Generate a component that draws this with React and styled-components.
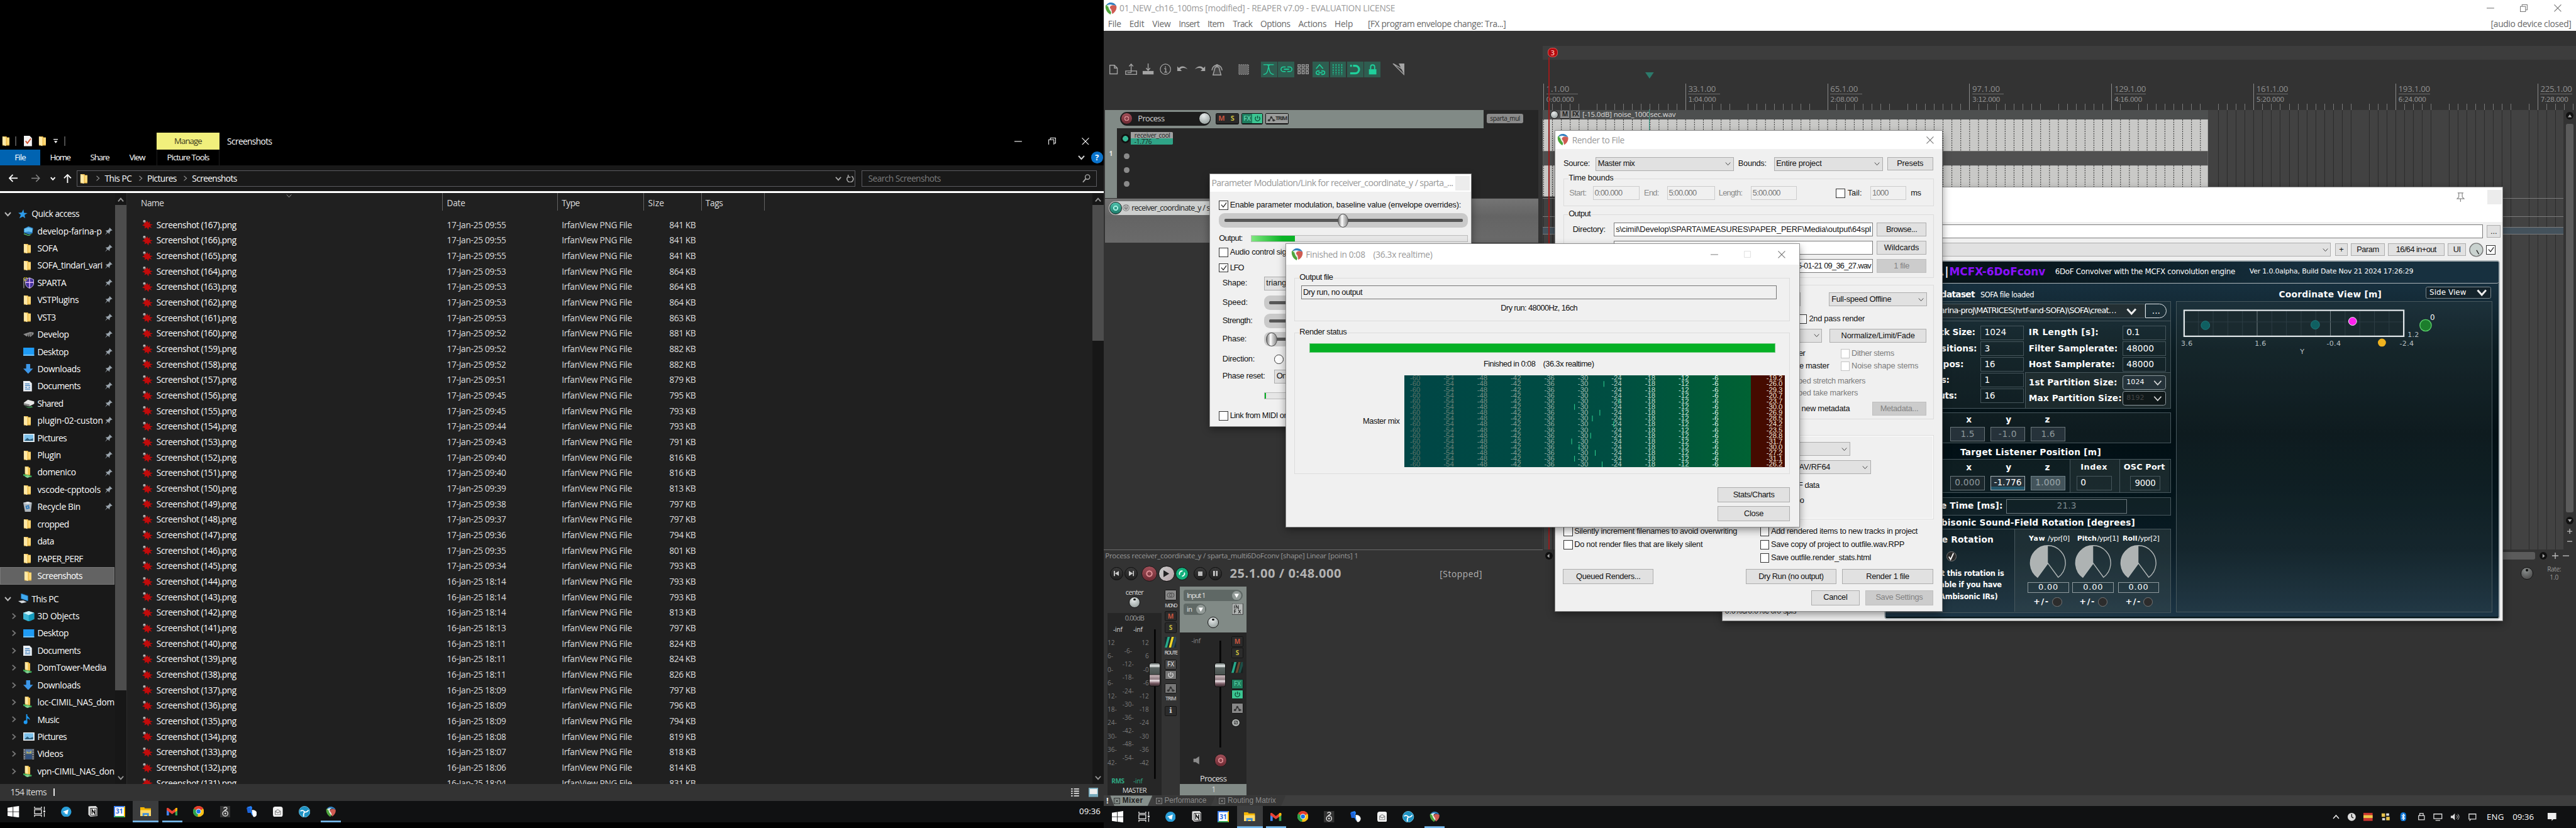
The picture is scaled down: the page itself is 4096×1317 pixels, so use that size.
import React, { useLayoutEffect, useRef } from "react";
import styled, { createGlobalStyle, css } from "styled-components";

const DESK_W = 4480;
const SEGOE = '"Open Sans", "Noto Sans", sans-serif';
const ARIAL = '"Liberation Sans", Arial, sans-serif';
const VERDANA = '"DejaVu Sans", Verdana, sans-serif';

const Global = createGlobalStyle`
  html, body { margin: 0; background: #000; overflow: hidden; }
  *, *::before, *::after { box-sizing: border-box; }
`;

const Desktop = styled.div`
  width: ${DESK_W}px;
  height: 1440px;
  zoom: 0.9142857;
  display: flex;
  position: relative;
  overflow: hidden;
  background: #000;
  font-family: ${SEGOE};
  font-size: 15px;
  line-height: 1;
`;

/* ---------- layout primitives ---------- */

const gaps = (at) => at.slice(1).map((x, i) => `${+(x - at[i]).toFixed(2)}px`).join(" ");

const Line = styled.div`
  display: grid;
  grid-auto-flow: column;
  justify-items: start;
  justify-content: start;
  align-items: ${(p) => p.$align || "center"};
  height: ${(p) => p.$h || 20}px;
  padding-left: ${(p) => p.$at[0] - (p.$o || 0)}px;
  grid-template-columns: ${(p) => gaps(p.$at)} max-content;
  ${(p) => p.$bg && css`background: ${p.$bg};`}
`;

const Stack = styled.div`
  display: grid;
  align-items: start;
  align-content: start;
  grid-template-columns: minmax(0, 1fr);
  padding-top: ${(p) => p.$at[0] - (p.$o || 0)}px;
  grid-template-rows: ${(p) => gaps(p.$at)} max-content;
`;

const TextBox = styled.span`
  display: inline-block;
  white-space: pre;
  width: ${(p) => (p.$w ? `${p.$w}px` : "auto")};
  font-size: ${(p) => p.$s || 15}px;
  font-weight: ${(p) => p.$b || 400};
  color: ${(p) => p.$c || "inherit"};
  ${(p) => p.$f && css`font-family: ${p.$f};`}
  line-height: 1.3;
`;

/* A run of text tracked so that it is exactly `w` wide. */
function T({ w, s, b, c, f, children }) {
  return (
    <TextBox $w={w} $s={s} $b={b} $c={c} $f={f}>
      <span data-fit={w || undefined}>{children}</span>
    </TextBox>
  );
}

function useTracking(ref) {
  useLayoutEffect(() => {
    const root = ref.current;
    const scale = root.getBoundingClientRect().width / DESK_W;
    const runs = [...root.querySelectorAll("[data-fit]")];
    runs.forEach((el) => { el.style.letterSpacing = "0px"; });
    const widths = runs.map((el) => el.getBoundingClientRect().width / scale);
    runs.forEach((el, i) => {
      const n = el.textContent.length;
      if (n) el.style.letterSpacing = `${(Number(el.dataset.fit) - widths[i]) / n}px`;
    });
  }, [ref]);
}

const Svg = ({ w = 16, h = w, vb, children, ...rest }) => (
  <svg width={w} height={h} viewBox={vb || `0 0 ${w} ${h}`} style={{ display: "block" }} fill="none" {...rest}>
    {children}
  </svg>
);

/* ---------- icons ---------- */

const Folder = () => (
  <Svg w={14} h={18}>
    <path d="M1 1h7l1 2h4v14H1z" fill="#f0c04f" />
    <path d="M1 1l6 2v15l-6-3z" fill="#ffe9a6" />
    <path d="M9 3h4v12H9z" fill="#ffd978" />
  </Svg>
);
const NetFolder = () => (
  <Svg w={16} h={20}>
    <path d="M3 0h6l1 2h2v13H3z" fill="#f0c04f" />
    <path d="M3 0l5 2v12l-5-2z" fill="#ffe9a6" />
    <path d="M0 13l15 3-1 3-14-3z" fill="#3fae5a" />
    <path d="M2 17l6-2 4 3-5 2z" fill="#7fd08f" />
  </Svg>
);
const Chev = ({ d = "down", s = 11, c = "#ddd", sw = 2 }) => {
  const path = { down: "M1 3l4.500 5 4.500-5", right: "M3 1l5 4.500-5 4.500", up: "M1 8l4.500-5 4.500 5" }[d];
  return <Svg w={s} vb="0 0 11 11"><path d={path} stroke={c} strokeWidth={sw} /></Svg>;
};
const Pin = () => (
  <Svg w={15}><path d="M9 1l5 5-3 .5-2 3v3l-3-3L1 14l3.500-5L2 6h3l3-2z" fill="#9aa4ad" /></Svg>
);
const Star = () => (
  <Svg w={16}><path d="M9 0l1 6 6 .5-5 3 1 6-4-3-6 3 2.500-6L0 6l6-.5z" fill="#2d9be8" /></Svg>
);
const ComputerIcon = () => (
  <Svg w={19} h={18}><path d="M6 0l12 4v9L6 9z" fill="#3fa9f0" /><path d="M6 0l12 4v9L6 9z" stroke="#1c5f94" /><path d="M1 13l9-1 6 3-9 2z" fill="#d6dbe0" /></Svg>
);
const ServerIcon = () => (
  <Svg w={18} h={17}><path d="M1 4l8-4 8 3-1 9-6 2-9-3z" fill="#2d86c9" /><path d="M2 4l7-2 7 2-1 6-6-1-7 1z" fill="#6cc3f5" /><path d="M1 12l8 3 6-2-5 4-9-3z" fill="#52b46b" /></Svg>
);
const ShieldIcon = () => (
  <Svg w={19} h={20}><path d="M3 3l8-2 7 3v7c0 4-4 7-7 8-4-1-7-4-7-8z" fill="#43309c" stroke="#d9d4f2" /><path d="M11 1v18M4 9h14" stroke="#e7b9ff" strokeWidth="1.500" /><path d="M1 1v18" stroke="#ccc" /><circle cx="4" cy="3" r="3" stroke="#e3d21f" /></Svg>
);
const ComboIcon = () => (
  <Svg w={19} h={10}><path d="M0 5l12-4 6 1v3l-6 5-1-3-2 3-1-3-2 2z" fill="#8a8a8a" /><path d="M8 5v4M11 4v5M14 3v4" stroke="#333" /></Svg>
);
const DesktopIcon = () => (
  <Svg w={19} h={14}><path d="M0 0h19v14H0z" fill="#1e9bf5" /><path d="M0 12h19v2H0z" fill="#7cc8fa" /></Svg>
);
const DownloadIcon = () => (
  <Svg w={17} h={17}><path d="M5 0h7v8h5l-8.500 9L0 8h5z" fill="#3d97e8" /></Svg>
);
const DocIcon = () => (
  <Svg w={15} h={18}><path d="M0 0h11l4 4v14H0z" fill="#e9eef3" /><path d="M3 5h8M3 8h9M3 11h4M3 14h9M9 11h3" stroke="#3a7ab8" strokeWidth="1.400" /></Svg>
);
const DriveIcon = () => (
  <Svg w={20} h={16}><path d="M1 7l7-5 11 3v4l-8 4-10-2z" fill="#e6e6e6" /><path d="M1 8l10 2v4L1 11z" fill="#888" /><path d="M2 13l8 2 4-2 3 2-8 1z" fill="#3fae5a" /></Svg>
);
const PictureIcon = () => (
  <Svg w={19} h={14}><path d="M.5.5h18v13H.5z" fill="#7cc0ea" stroke="#f3f5f7" strokeWidth="2" /><path d="M2 12l5-5 4 3 6-2v4z" fill="#2c5c7a" /></Svg>
);
const BinIcon = () => (
  <Svg w={15} h={18}><path d="M0 2l8-2 7 2-2 16H3z" fill="#aeb6bd" /><path d="M0 2l8 2 7-2-7-2z" fill="#e4e8ec" /><path d="M5 8l4-1 1 4-4 1z" stroke="#2f79b9" strokeWidth="2" /></Svg>
);
const CubeIcon = () => (
  <Svg w={19} h={18}><path d="M9.500 0L19 3v11l-9.500 4L0 14V3z" fill="#3cb5d3" /><path d="M9.500 0L19 3 9.500 7 0 3z" fill="#c9f1f8" /><path d="M9.500 7L19 3v11l-9.500 4z" fill="#149bbd" /></Svg>
);
const MusicIcon = () => (
  <Svg w={14} h={18}><path d="M6 0v13" stroke="#1e9bf5" strokeWidth="2" /><path d="M6 0c0 5 7 5 5 11 0-3-3-4-5-4z" fill="#1e9bf5" /><circle cx="4" cy="14" r="3.300" fill="#1e9bf5" /></Svg>
);
const VideoIcon = () => (
  <Svg w={19} h={19}><path d="M0 0h19v19H0z" fill="#4b5058" /><path d="M4 1h11v8H4z" fill="#5b7ba8" /><path d="M4 10h11v8H4z" fill="#2f4f7d" /><path d="M6 4l4 3 4-4v5H6z" fill="#bdb355" /><path d="M2 1v18M17 1v18" stroke="#a9adb3" strokeWidth="2" strokeDasharray="2 2" /></Svg>
);
const SplatIcon = () => (
  <Svg w={19} h={18}>
    <path d="M5 1l3 4 1-3 2 4 3-3-1 5 6 1-5 2 3 4-5-2-1 5-3-4-4 2 1-4-5-2 4-2-2-4z" fill="#c20b0b" />
    <circle cx="4" cy="3.500" r="2.600" fill="#777" /><circle cx="3.500" cy="2.800" r="1.200" fill="#eee" />
  </Svg>
);
const ReaperIcon = ({ s = 20 }) => (
  <Svg w={s} vb="0 0 20 20">
    <path d="M1 6c2-4 5-6 9-6s8 3 9 6c-4-2-7-3-11-1-3 1-3 4 0 5z" fill="#2f7fbf" />
    <path d="M1 5c2-2 5-1 6 2 1 4 3 6 4 8l-2 5C4 17 0 12 1 5z" fill="#4ea53c" />
    <path d="M8 8c1-3 5-5 11-2 1 6-3 11-7 13 0-5-5-7-4-11z" fill="#cf5b52" />
    <path d="M2 6c4-4 8-3 10-2-4 0-5 3-3 6 2 2 3 5 2 8-2-5-4-5-5-9-1-3-2-4-4-3z" fill="#fff" opacity=".85" />
  </Svg>
);
const WinMin = ({ c }) => <Svg w={13}><path d="M0 6.500h13" stroke={c} strokeWidth="1.200" /></Svg>;
const WinRestore = ({ c }) => <Svg w={13}><path d="M.6 3.500h9v9h-9zM3.500 3V.6h9v9H10" stroke={c} strokeWidth="1.100" /></Svg>;
const WinMax = ({ c }) => <Svg w={12}><path d="M.6.6h10.800v10.800H.6z" stroke={c} /></Svg>;
const WinClose = ({ c }) => <Svg w={13}><path d="M.5.5l12 12M12.500.5l-12 12" stroke={c} strokeWidth="1.200" /></Svg>;

/* ---------- explorer ---------- */

const LeftMonitor = styled.div`
  width: 1920px;
  height: 1440px;
  padding-top: 231px;
  display: flex;
  flex-direction: column;
  color: #fff;
`;
const VBar = styled.i`
  width: 2px;
  height: ${(p) => p.$h || 16}px;
  background: ${(p) => p.$c || "#4c4c4c"};
`;
const ManageTab = styled.div`
  width: 110px;
  height: 29px;
  background: #f1ef7c;
  color: #3b3a1c;
  display: flex;
  align-items: center;
  justify-content: center;
`;
const RibbonTab = styled.div`
  width: ${(p) => p.$w}px;
  height: 28px;
  display: flex;
  align-items: center;
  justify-content: center;
  background: ${(p) => (p.$file ? "#0063b1" : "transparent")};
  border: ${(p) => (p.$line ? "solid #1e1e1e" : "0 none")};
  border-width: 0 1px;
`;
const Help = styled.div`
  width: 20px;
  height: 20px;
  border-radius: 50%;
  background: #0a73cc;
  display: flex;
  align-items: center;
  justify-content: center;
`;
const AddressField = styled.div`
  width: ${(p) => p.$w}px;
  height: 28px;
  border: 1px solid #5b5b60;
  background: #191919;
`;
const WhiteRule = styled.div`
  height: 3px;
  background: #fff;
`;
const ExplorerBody = styled.div`
  height: 1028px;
  display: flex;
`;
const NavPane = styled.div`
  width: 200px;
  padding-top: 21px;
  background: #191919;
  overflow: hidden;
`;
const ScrollCol = styled.div`
  width: 20px;
  display: flex;
  flex-direction: column;
  align-items: center;
  background: #171717;
  padding-top: 6px;
`;
const ScrollThumb = styled.div`
  width: 20px;
  margin-top: 4px;
  height: ${(p) => p.$h}px;
  background: #4d4d4d;
`;
const ScrollEnd = styled.div`
  margin-top: auto;
  padding-bottom: 6px;
`;
const NavRow = styled.div`
  height: 30px;
  width: 199px;
  margin-bottom: ${(p) => p.$mb || 0}px;
  background: ${(p) => (p.$on ? "#636363" : "transparent")};
  border: ${(p) => (p.$on ? "1px solid #777" : "0 none")};
`;
const NavLabel = styled.div`
  width: ${(p) => p.$w}px;
  overflow: hidden;
`;
const FileList = styled.div`
  width: 1680px;
  background: #202020;
  overflow: hidden;
  border-left: 2px solid #2c2c2c;
`;
const ColRule = styled.i`
  width: 1px;
  height: 31px;
  background: #636363;
`;
const HeadCell = styled.div`
  height: 34px;
  display: flex;
  align-items: center;
  color: #dedede;
`;
const SizeCell = styled.div`
  width: 83px;
  text-align: right;
`;
const StatusStrip = styled.div`
  height: 29px;
  background: #333;
  color: #dcdcdc;
`;

const NAV = [
  [ServerIcon, "develop-farina-p", 112, 1], [Folder, "SOFA", 35, 1], [Folder, "SOFA_tindari_vari", 113, 1],
  [ShieldIcon, "SPARTA", 50, 1], [Folder, "VSTPlugins", 72, 1], [Folder, "VST3", 32, 1],
  [ComboIcon, "Develop", 55, 1], [DesktopIcon, "Desktop", 54, 1], [DownloadIcon, "Downloads", 75, 1],
  [DocIcon, "Documents", 75, 1], [DriveIcon, "Shared", 45, 1], [Folder, "plugin-02-custon", 114, 1],
  [PictureIcon, "Pictures", 51, 1], [Folder, "Plugin", 41, 1], [NetFolder, "domenico", 67, 1],
  [Folder, "vscode-cpptools", 110, 1], [BinIcon, "Recycle Bin", 75, 1], [Folder, "cropped", 55],
  [Folder, "data", 29], [Folder, "PAPER_PERF", 79], [Folder, "Screenshots", 78],
];
const PC = [
  [CubeIcon, "3D Objects", 73], [DesktopIcon, "Desktop", 54], [DocIcon, "Documents", 75],
  [NetFolder, "DomTower-Media", 120], [DownloadIcon, "Downloads", 75], [NetFolder, "loc-CIMIL_NAS_dom", 134],
  [MusicIcon, "Music", 38], [PictureIcon, "Pictures", 51], [VideoIcon, "Videos", 45], [NetFolder, "vpn-CIMIL_NAS_don", 134],
];
const FILES = (
  "17 09:55 841,17 09:55 841,17 09:55 841,17 09:53 864,17 09:53 864,17 09:53 864,17 09:53 863,17 09:52 881," +
  "17 09:52 882,17 09:52 882,17 09:51 879,17 09:45 795,17 09:45 793,17 09:44 793,17 09:43 791,17 09:40 816," +
  "17 09:40 816,17 09:39 813,17 09:38 797,17 09:37 797,17 09:36 794,17 09:35 801,17 09:34 793,16 18:14 793," +
  "16 18:14 793,16 18:14 813,16 18:13 797,16 18:11 824,16 18:11 824,16 18:11 826,16 18:09 797,16 18:09 796," +
  "16 18:09 794,16 18:08 819,16 18:07 818,16 18:06 814,16 18:04 831"
).split(",").map((r) => r.split(" "));

function Explorer() {
  return (
    <LeftMonitor>
      <Line $h={29} $align="center" $at={[3, 26, 42, 67, 93, 112, 272, 395, 1764, 1823, 1881]}>
        <Folder /><VBar />
        <Svg w={14} h={18}><path d="M0 0h10l4 4v14H0z" fill="#f4f4f4" /><path d="M3 9l3 4 6-8" stroke="#d2502c" strokeWidth="2" /></Svg>
        <Folder />
        <Svg w={8} h={8}><path d="M0 0h8v1.500H0zM1 3.500h6L4 7.500z" fill="#fff" /></Svg>
        <VBar />
        <ManageTab><T w={48} s={14.5}>Manage</T></ManageTab>
        <T w={78}>Screenshots</T>
        <WinMin c="#fff" /><WinRestore c="#fff" /><WinClose c="#fff" />
      </Line>
      <Line $h={28} $at={[0, 87, 157, 225, 272, 1875, 1898]}>
        <RibbonTab $w={70} $file><T w={19} s={14.5}>File</T></RibbonTab>
        <T w={35} s={14.5}>Home</T><T w={33} s={14.5}>Share</T><T w={27} s={14.5}>View</T>
        <RibbonTab $w={110} $line><T w={73} s={14.5}>Picture Tools</T></RibbonTab>
        <Chev s={12} c="#ccc" /><Help><T s={14} b={700}>?</T></Help>
      </Line>
      <Line $h={45} $bg="#191919" $at={[15, 55, 88, 111, 134, 1499]}>
        <Svg w={16} h={14}><path d="M16 7H1M7 1L1 7l6 6" stroke="#fff" strokeWidth="2" /></Svg>
        <Svg w={15} h={14}><path d="M0 7h14M8 1l6 6-6 6" stroke="#888" strokeWidth="1.600" /></Svg>
        <Chev s={9} c="#fff" sw={2.5} />
        <Svg w={14} h={16}><path d="M7 16V1M1 7l6-6 6 6" stroke="#fff" strokeWidth="2" /></Svg>
        <AddressField $w={1354}>
          <Line $h={26} $o={135} $at={[139, 165, 182, 239, 256, 317, 334, 1452, 1471]}>
            <Folder /><Chev d="right" s={10} c="#999" sw={1.4} /><T w={47}>This PC</T>
            <Chev d="right" s={10} c="#999" sw={1.4} /><T w={51}>Pictures</T>
            <Chev d="right" s={10} c="#999" sw={1.4} /><T w={78}>Screenshots</T>
            <Chev s={11} c="#aaa" />
            <Svg w={14}><path d="M10 2.500A5.500 5.500 0 1 1 4 3M4 0v4h4" stroke="#aaa" strokeWidth="1.700" /></Svg>
          </Line>
        </AddressField>
        <AddressField $w={409}>
          <Line $h={26} $o={1500} $at={[1510, 1882]}>
            <T w={126} c="#7d7d7d">Search Screenshots</T>
            <Svg w={15}><circle cx="9" cy="5" r="4" stroke="#aaa" strokeWidth="1.500" /><path d="M6 8l-5 6" stroke="#aaa" strokeWidth="2" /></Svg>
          </Line>
        </AddressField>
      </Line>
      <WhiteRule />
      <ExplorerBody>
        <NavPane>
          <NavRow><Line $h={30} $at={[8, 32, 55]}><Chev s={12} c="#bbb" /><Star /><T w={83}>Quick access</T></Line></NavRow>
          {NAV.map(([Icon, name, w, pin], i) => (
            <NavRow key={name} $on={i === 20} $mb={i === 20 ? 10 : 0}>
              <Line $h={i === 20 ? 28 : 30} $o={i === 20 ? 1 : 0} $at={[41, 65, 182]}>
                <Icon /><NavLabel $w={pin ? 115 : 134}><T w={w}>{name}</T></NavLabel>{pin ? <Pin /> : null}
              </Line>
            </NavRow>
          ))}
          <NavRow><Line $h={30} $at={[8, 31, 55]}><Chev s={12} c="#bbb" /><ComputerIcon /><T w={47}>This PC</T></Line></NavRow>
          {PC.map(([Icon, name, w]) => (
            <NavRow key={name}>
              <Line $h={30} $at={[19, 41, 65]}>
                <Chev d="right" s={11} c="#777" /><Icon /><NavLabel $w={135}><T w={w}>{name}</T></NavLabel>
              </Line>
            </NavRow>
          ))}
        </NavPane>
        <ScrollCol><Chev d="up" c="#999" /><ScrollThumb $h={844} /><ScrollEnd><Chev c="#999" /></ScrollEnd></ScrollCol>
        <FileList>
          <Line $h={41.5} $o={222} $align="start" $at={[246, 499, 770, 778, 970, 978, 1120, 1128, 1220, 1228, 1330]}>
            <HeadCell><T w={40}>Name</T></HeadCell><Chev s={10} c="#999" sw={1.2} /><ColRule /><HeadCell><T w={32}>Date</T></HeadCell><ColRule />
            <HeadCell><T w={31}>Type</T></HeadCell><ColRule /><HeadCell><T w={28}>Size</T></HeadCell><ColRule />
            <HeadCell><T w={30}>Tags</T></HeadCell><ColRule />
          </Line>
          {FILES.map(([day, time, kb], i) => (
            <Line key={i} $h={27} $o={222} $at={[248, 273, 778, 978, 1128]}>
              <SplatIcon />
              <T w={139}>{`Screenshot (${167 - i}).png`}</T>
              <T w={103} c="#dedede">{`${day}-Jan-25 ${time}`}</T>
              <T w={122} c="#dedede">IrfanView PNG File</T>
              <SizeCell><T w={46} c="#dedede">{`${kb} KB`}</T></SizeCell>
            </Line>
          ))}
        </FileList>
        <ScrollCol><Chev d="up" c="#999" /><ScrollThumb $h={236} /><ScrollEnd><Chev c="#999" /></ScrollEnd></ScrollCol>
      </ExplorerBody>
      <StatusStrip>
        <Line $h={29} $at={[18, 93, 1863, 1893]}>
          <T w={63}>154 items</T><VBar $h={13} $c="#e5e5e5" />
          <Svg w={14} h={16}><path d="M0 2h14M0 6h14M0 10h14M0 14h14" stroke="#ddd" strokeWidth="2" strokeDasharray="3 2 9" /></Svg>
          <Svg w={17} h={16}><path d="M0 0h17v16H0z" fill="#7ab" /><path d="M2 2h13v9H2z" fill="#eee" /></Svg>
        </Line>
      </StatusStrip>
      <Taskbar />
    </LeftMonitor>
  );
}

/* ---------- taskbar ---------- */

const Bar = styled.div`
  height: 38px;
  padding-left: 1px;
  display: flex;
  align-items: center;
  background: #101112;
  color: #fff;
`;
const Task = styled.div`
  width: 45px;
  margin-right: 1px;
  height: 38px;
  display: flex;
  align-items: center;
  justify-content: center;
  background: ${(p) => (p.$on ? "#3b3c3d" : "transparent")};
  box-shadow: inset 0 ${(p) => (p.$on ? -3 : 0)}px #76b9ed;
`;
const Underlined = styled.div`
  width: 35px;
  height: 38px;
  display: flex;
  align-items: center;
  justify-content: center;
  box-shadow: inset 0 -3px #76b9ed;
`;
const ClockEnd = styled.div`
  margin-left: auto;
  padding-right: 6px;
`;

const WinLogo = () => <Svg w={20}><path d="M0 3l9-1.300v8H0zM10 1.500L20 0v9.700H10zM0 10.500h9v8L0 17.300zM10 10.500h10V20l-10-1.400z" fill="#fff" /></Svg>;
const TaskView = () => <Svg w={20}><path d="M1 1v3h12V1M1 19v-3h12v3M1 6.500h12v7H1z" stroke="#eee" strokeWidth="1.400" /><path d="M18 1v6M18 12v7" stroke="#eee" strokeWidth="1.400" /><path d="M16.500 8h3v3h-3z" fill="#fff" /></Svg>;
const Telegram = () => <Svg w={18}><circle cx="9" cy="9" r="9" fill="#2ba0da" /><path d="M3 9l10-4-2 9-3-2-1 1-.5-3z" fill="#fff" /></Svg>;
const Notion = () => <Svg w={17} h={19}><path d="M1 1l12-1 3 3v14l-12 1-3-3z" fill="#efefef" stroke="#bbb" /><path d="M4 4h11v12H4z" fill="#fff" stroke="#111" /><path d="M7 14V6.500l5 7V6" stroke="#111" strokeWidth="1.800" /></Svg>;
const CalendarBox = styled.div`
  width: 20px;
  height: 20px;
  border: 3px solid #4285f4;
  border-right-color: #fbbc04;
  border-bottom-color: #34a853;
  background: #fff;
  display: flex;
  align-items: center;
  justify-content: center;
`;
const ExplorerIcon = () => <Svg w={19} h={16}><path d="M0 0h7l1 2h11v14H0z" fill="#f4b400" /><path d="M0 5h19v11H0z" fill="#ffd968" /><path d="M4 16v-6h11v6h-3v-3H7v3z" fill="#3f8fdc" /></Svg>;
const Gmail = () => <Svg w={19} h={14}><path d="M0 1v13h4V5z" fill="#4285f4" /><path d="M19 1v13h-4V5z" fill="#34a853" /><path d="M0 1c1-2 3-1 4 0l5.500 4.500L15 1c1-1 3-2 4 0v3l-9.500 7L0 4z" fill="#ea4335" /><path d="M15 1c1-1 3-2 4 0v3l-4 3z" fill="#fbbc04" /></Svg>;
const Chrome = () => <Svg w={19}><circle cx="9.500" cy="9.500" r="9.500" fill="#fbc116" /><path d="M9.500 9.500L1.300 4.700A9.500 9.500 0 0 1 17.700 4.700z" fill="#e33b2e" /><path d="M9.500 9.500L1.300 4.700a9.500 9.500 0 0 0 6.500 14.200z" fill="#2ba24c" /><circle cx="9.500" cy="9.500" r="4.600" fill="#fff" /><circle cx="9.500" cy="9.500" r="3.600" fill="#1a73e8" /></Svg>;
const Foobar = () => <Svg w={18} h={20}><path d="M0 0h18v20H0z" fill="#333" /><circle cx="9" cy="13" r="4.500" stroke="#ddd" strokeWidth="1.600" /><circle cx="9" cy="13" r="1.500" fill="#ddd" /><path d="M6 4c2-3 6-2 6 0 0 3-5 2-4 5" stroke="#ddd" strokeWidth="1.600" /></Svg>;
const Sourcetree = () => <Svg w={18} h={19}><path d="M1 2l7-2 2 3-2 6 5 3-3 5-3-6z" fill="#2684ff" /><path d="M0 3h7v9H2z" fill="#1c63d8" /><path d="M9 7c4-1 8 1 9 5s-3 8-6 7c-2-3-2-8-3-12z" fill="#fff" /></Svg>;
const MailBox = () => <Svg w={17} h={18}><rect width="17" height="18" rx="4" fill="#f2f2f2" /><path d="M4 8l4.500-3L13 8v6H4zM4 8l4.500 3L13 8" stroke="#888" strokeWidth="1.200" /></Svg>;
const Swirl = () => <Svg w={20}><circle cx="10" cy="10" r="9.500" fill="#1f93c4" stroke="#6fc3e3" /><path d="M3 9c4-3 6 0 7 1s5 1 7-3M10 10c-1 3-3 5-1 8" stroke="#fff" strokeWidth="2" /></Svg>;

function Taskbar({ tray }) {
  return (
    <Bar>
      <Task><WinLogo /></Task><Task><TaskView /></Task><Task><Telegram /></Task>
      <Task><Notion /></Task>
      <Task><CalendarBox><T s={11} b={700} c="#2a6be0">31</T></CalendarBox></Task>
      <Task $on><ExplorerIcon /></Task>
      <Task><Underlined><Gmail /></Underlined></Task>
      <Task><Chrome /></Task><Task><Foobar /></Task><Task><Sourcetree /></Task><Task><MailBox /></Task><Task><Swirl /></Task>
      <Task><Underlined><ReaperIcon s={18} /></Underlined></Task>
      {tray || <ClockEnd><T w={37} s={14.5}>09:36</T></ClockEnd>}
    </Bar>
  );
}

const Tray = () => (
  <Line $h={38} $o={2519} $at={[4057, 4082, 4111, 4141, 4172, 4203, 4232, 4262, 4292, 4325, 4370, 4430]}>
    <Chev d="up" s={12} c="#eee" sw={1.5} />
    <Svg w={16}><circle cx="8" cy="8" r="7" fill="#ddd" /><path d="M8 3v5l3 2" stroke="#222" strokeWidth="1.500" /></Svg>
    <Svg w={16}><path d="M0 1h16v14H0z" fill="#c9352f" /><path d="M0 5h16v5H0z" fill="#eec84a" /></Svg>
    <Svg w={16}><path d="M1 2h6v6H1zM9 8h6v6H9z" fill="#e6c14a" /><path d="M9 2h5v4H9zM2 10h5v4H2z" fill="#ddd" /></Svg>
    <Svg w={16}><rect x="3" width="10" height="16" rx="5" fill="#0a74d6" /><path d="M5.500 5l5 5.500L8 13V3l2.500 2.500-5 5.500" stroke="#fff" strokeWidth="1.200" /></Svg>
    <Svg w={16}><path d="M3 6h10v7H3zM5 6V2h6v4" stroke="#ddd" strokeWidth="1.400" /></Svg>
    <Svg w={16}><path d="M1 3h14v8H1zM4 14h8" stroke="#ddd" strokeWidth="1.400" /></Svg>
    <Svg w={16}><path d="M1 6h3l4-4v12l-4-4H1z" fill="#ddd" /><path d="M11 5c2 2 2 4 0 6M13 3c3 3 3 7 0 10" stroke="#ddd" /></Svg>
    <Svg w={16}><path d="M2 3h12v9H2zM5 12l-2 3" stroke="#ddd" strokeWidth="1.400" /></Svg>
    <T w={30} s={14.5}>ENG</T><T w={37} s={14.5}>09:36</T>
    <Svg w={17} h={16}><path d="M1 1h15v11h-5l-3 3v-3H1z" fill="#eee" /></Svg>
  </Line>
);

/* ---------- reaper main window ---------- */

const RightMonitor = styled.div`
  width: 2560px;
  height: 1440px;
  background: #333;
  display: flex;
  flex-direction: column;
`;
const MenuArea = styled.div`
  height: 54px;
  background: #fff;
  color: #666;
`;
const Workspace = styled.div`
  height: 902px;
  display: flex;
`;
const TrackSide = styled.div`
  width: 763px;
`;
const ToolButton = styled.div`
  width: 28px;
  height: 28px;
  display: flex;
  align-items: center;
  justify-content: center;
  background: ${(p) => (p.$on ? "#2e5d50" : "transparent")};
`;
const Track = styled.div`
  margin-left: 2px;
  width: 753px;
  height: 154px;
  display: flex;
  background: #262626;
`;
const TrackNumber = styled.div`
  width: 20px;
  background: #818a86;
  color: #e8e8e8;
  display: flex;
  align-items: center;
  justify-content: center;
`;
const TrackMain = styled.div`
  width: 733px;
`;
const TrackHead = styled.div`
  width: 638px;
  height: 32px;
  background: #818a86;
`;
const NamePill = styled.div`
  width: 158px;
  height: 24px;
  border-radius: 12px;
  background: #1d1d1d;
`;
const Knob = styled.div`
  width: ${(p) => p.$s}px;
  height: ${(p) => p.$s}px;
  border-radius: 50%;
  border: 1px solid #151515;
  background: ${(p) => p.$bg || "radial-gradient(circle at 40% 25%, #e8ecec, #a3acaa 70%)"};
  display: flex;
  justify-content: center;
  align-items: ${(p) => (p.$dot ? "flex-start" : "center")};
  &::after {
    content: "";
    display: ${(p) => (p.$dot ? "block" : "none")};
    margin-top: 2px;
    width: 4px;
    height: 4px;
    border-radius: 50%;
    background: #111;
  }
`;
const RecordButton = styled.div`
  width: ${(p) => p.$s}px;
  height: ${(p) => p.$s}px;
  border-radius: 50%;
  background: radial-gradient(circle, transparent 0 18%, ${(p) => p.$ring || "#d98a90"} 20% 30%, transparent 34%),
    linear-gradient(${(p) => p.$a || "#a25059"}, ${(p) => p.$b || "#6d2a33"});
  border: 1px solid #1a1a1a;
`;
const PairButton = styled.div`
  display: flex;
  flex-direction: ${(p) => (p.$v ? "column" : "row")};
  border: 1px solid #111;
  border-radius: 2px;
  overflow: hidden;
`;
const SmallKey = styled.div`
  width: ${(p) => p.$w || 18}px;
  height: ${(p) => p.$h || 18}px;
  display: flex;
  align-items: center;
  justify-content: center;
  background: ${(p) => p.$bg || "#2a2a2a"};
  color: ${(p) => p.$c || "#ccc"};
  border-bottom: 1px solid #151515;
`;
const Badge = styled.div`
  width: 63px;
  height: 16px;
  margin-top: 7px;
  border-radius: 3px;
  background: #8b8b8b;
  color: #222;
  display: flex;
  align-items: center;
  justify-content: center;
`;
const ParamTag = styled.div`
  width: 73px;
  height: 22px;
  background: linear-gradient(#a0a0a0 50%, #2fa487 50%);
  border-radius: 0 2px 2px 0;
  color: #1c1c1c;
  padding-left: 6px;
  display: flex;
  flex-direction: column;
`;
const TagRow = styled.div`
  height: 11px;
  display: flex;
  align-items: center;
`;
const SendDots = styled.div`
  padding: 8px 0 0 13px;
  display: flex;
  flex-direction: column;
  gap: 14px;
`;
const SendDot = styled.i`
  width: 9px;
  height: 10px;
  border-radius: 50%;
  background: #8a8a8a;
`;
const EnvLane = styled.div`
  margin-left: 2px;
  width: 753px;
  height: 76px;
  background: linear-gradient(#747474, #646464 40%, #6a6a6a);
  padding: 4px 0 0 6px;
`;
const EnvPill = styled.div`
  width: 400px;
  height: 24px;
  border-radius: 12px 0 0 12px;
  background: #cdcfce;
  color: #222;
`;
const ArrangeSide = styled.div`
  position: relative;
  width: 1797px;
  padding-top: 26px;
`;
const RegionLane = styled.div`
  height: 24px;
  background: #3d3d3d;
`;
const Ruler = styled.div`
  margin-top: 42px;
  height: 45px;
  padding-left: 1px;
  display: flex;
  background: repeating-linear-gradient(90deg, #777 0 1px, transparent 1px 15.4375px) 1px 34px / 100% 11px no-repeat;
  overflow: hidden;
`;
const RulerMark = styled.div`
  width: 247px;
  flex: none;
  height: 45px;
  border-left: 1px solid #8a8a8a;
  padding-left: 4px;
  color: #8f8f8f;
`;
const MarkTop = styled.div`
  width: 55px;
  height: 18px;
  border-bottom: 1px solid #6c6c6c;
`;
const ArrangeRow = styled.div`
  height: 765px;
  display: flex;
`;
const ArrangeGrid = styled.div`
  width: 1775px;
  background: repeating-linear-gradient(90deg, #2b2b2b 0 1px, #424242 1px 15.4375px) 1px 0;
`;
const MediaItem = styled.div`
  width: 1157px;
  height: 154px;
  border-bottom: 3px solid #333;
`;
const ItemHead = styled.div`
  height: 17px;
  background: #4d4f4f;
  color: #ddd;
`;
const LaneLine = styled.div`
  height: ${(p) => p.$h}px;
  border-top: 1px solid #7b7b7b;
  background: ${(p) => p.$bg || "transparent"};
`;
const VScroll = styled.div`
  width: 22px;
  background: #333;
  display: flex;
  flex-direction: column;
  align-items: center;
  padding: 4px 0 10px;
  gap: 8px;
`;
const VThumb = styled.div`
  width: 13px;
  flex: 1;
  border-radius: 3px;
  background: #5b5b5b;
`;
const RoundArrow = styled.div`
  width: 13px;
  height: 13px;
  border-radius: 50%;
  background: #111;
  display: flex;
  align-items: center;
  justify-content: center;
`;
const EditCursor = styled.div`
  position: absolute;
  left: 10px;
  top: 45px;
  width: 1.5px;
  height: 857px;
  background: #9b1c1c;
`;
const MarkerFlag = styled.div`
  position: absolute;
  left: 9px;
  top: 29px;
  width: 17px;
  height: 17px;
  border-radius: 7px;
  border: 1px solid #d9605c;
  background: #b5090e;
  color: #ffb9b0;
  display: flex;
  align-items: center;
  justify-content: center;
`;
const PlayCursor = styled.div`
  position: absolute;
  left: 178px;
  top: 72px;
  width: 16px;
  height: 830px;
  background: linear-gradient(#2c9b85, #2c9b85) 7px 64px / 1.5px 100% no-repeat;
`;

const MENU = [
  ["File", 1927, 23], ["Edit", 1964, 26], ["View", 2004, 32], ["Insert", 2050, 36], ["Item", 2100, 29], ["Track", 2144, 34],
  ["Options", 2192, 52], ["Actions", 2258, 49], ["Help", 2321, 32], ["[FX program envelope change: Tra...]", 2379, 240],
  ["[audio device closed]", 4332, 140],
];
const MARKS = [["1.1.00", "0:00.000", 40], ["33.1.00", "1:04.000", 48], ["65.1.00", "2:08.000", 48], ["97.1.00", "3:12.000", 48],
  ["129.1.00", "4:16.000", 55], ["161.1.00", "5:20.000", 55], ["193.1.00", "6:24.000", 55], ["225.1.00", "7:28.000", 55]];

const G = "#1fd19c";
const N = "#a5a5a5";
const TOOLS = [
  [0, <path key="a" d="M4 3h8l5 5v10H4zM12 3v5h5" stroke={N} strokeWidth="1.500" />],
  [0, <path key="a" d="M1 13h19v6H1zM10.500 15V1M7 5l3.500-4L14 5M4 16h7" stroke={N} strokeWidth="1.500" />],
  [0, <g key="a"><path d="M1 13h19v6H1z" fill={N} /><path d="M10.500 0v11M7 8l3.500 4L14 8" stroke={N} strokeWidth="1.500" /></g>],
  [0, <g key="a"><circle cx="10" cy="10" r="9" stroke={N} strokeWidth="1.300" /><path d="M8 9h2.500v6M8 15h5M10 5v2" stroke={N} strokeWidth="1.600" /></g>],
  [0, <path key="a" d="M1 5v8h8L6 10c3-3 8-3 13 0-4-6-12-7-15-2z" fill={N} />],
  [0, <path key="a" d="M20 5v8h-8l3-3c-3-3-8-3-13 0 4-6 12-7 15-2z" fill={N} />],
  [0, <path key="a" d="M7 6h6l4 14H3zM9 6V2h2v4M1 12c1-6 4-9 9-9s8 3 9 9" stroke={N} strokeWidth="1.500" fill="#7774" />],
  [0, <path key="a" d="M2 2h17v17H2z" fill="#666" stroke={N} strokeDasharray="2 1.500" />],
  [1, <path key="a" d="M1 2h6c6 0 1 17 12 17M19 2h-6C7 2 12 19 1 19M1 2h18" stroke={G} strokeWidth="1.500" />],
  [1, <path key="a" d="M9 6H5a4 4 0 0 0 0 8h4M12 6h4a4 4 0 0 1 0 8h-4M6 10h9" stroke={G} strokeWidth="1.700" />],
  [0, <path key="a" d="M1 2h4v4H1zM8 2h4v4H8zM15 2h4v4h-4zM1 8h4v4H1zM15 8h4v4h-4zM1 14h4v4H1zM8 14h4v4H8zM15 14h4v4h-4zM8 8h4v4H8z" stroke={N} strokeWidth="1.400" />],
  [1, <path key="a" d="M3 9l6-7 6 7M9 13H6a3 3 0 0 0 0 6h3M12 13h3a3 3 0 0 1 0 6h-3M7 16h7" stroke={G} strokeWidth="1.700" />],
  [1, <path key="a" d="M2 1v19M7 1v19M12 1v19M17 1v19" stroke={G} strokeWidth="1.400" strokeDasharray="3 1.500" />],
  [1, <path key="a" d="M2 4h9a6 6 0 0 1 0 13H2" stroke={G} strokeWidth="3.500" strokeDasharray="3 2 40" />],
  [1, <g key="a"><path d="M4 10h13v9H4z" fill={G} /><path d="M7 10V6a3.500 3.500 0 0 1 7 0v4" stroke={G} strokeWidth="2" /></g>],
  [0, <g key="a"><path d="M1 0l20 20V12z" stroke={N} strokeWidth="1.500" /><path d="M11 0h10v20z" fill={N} /></g>],
];
const TOOL_X = [1923, 1953, 1983, 2013, 2043, 2073, 2103, 2149, 2193, 2223, 2253, 2283, 2313, 2343, 2373, 2418];

const range = (n) => Array.from({ length: n }, (_, i) => i);

const PowerGlyph = ({ c }) => <Svg w={10}><path d="M5 0v5M2.500 2a4 4 0 1 0 5 0" stroke={c} strokeWidth="1.400" /></Svg>;
const EnvGlyph = ({ c }) => <Svg w={14} h={10}><path d="M1 8h3l3-6 4 6h3" stroke={c} strokeWidth="1.400" /><circle cx="7" cy="3" r="2" fill={c} /><circle cx="3" cy="8" r="2" fill={c} /><circle cx="11" cy="8" r="2" fill={c} /></Svg>;

function Workarea() {
  return (
    <Workspace>
      <TrackSide>
        <Stack $o={54} $at={[107, 191, 346]}>
          <Line $h={28} $o={1920} $at={TOOL_X}>
            {TOOLS.map(([on, art], i) => <ToolButton key={i} $on={on}><Svg w={21}>{art}</Svg></ToolButton>)}
          </Line>
          <Track>
            <TrackNumber><T s={11} b={700}>1</T></TrackNumber>
            <TrackMain>
              <Line $h={32} $o={1942} $align="start" $at={[1942, 2586]}>
                <TrackHead>
                  <Line $h={31} $o={1942} $at={[1948, 2114, 2159, 2201]}>
                    <NamePill>
                      <Line $h={24} $at={[1, 31, 137]}>
                        <RecordButton $s={21} /><T w={46} s={14} c="#d5d5d5">Process</T><Knob $s={21} />
                      </Line>
                    </NamePill>
                    <PairButton><SmallKey $w={19} $c="#c4553f"><T s={12} b={700}>M</T></SmallKey><SmallKey $w={19} $c="#c9bd3e"><T s={12} b={700}>S</T></SmallKey></PairButton>
                    <PairButton><SmallKey $w={18} $bg="#1f7d5f" $c="#5fd8ad"><T s={11} b={600}>FX</T></SmallKey><SmallKey $w={17} $bg="#3cc592"><PowerGlyph c="#0c4a34" /></SmallKey></PairButton>
                    <PairButton><SmallKey $w={38} $bg="#9a9c9b" $c="#333"><EnvGlyph c="#333" /><T w={20} s={10} b={700}>TRIM</T></SmallKey></PairButton>
                  </Line>
                </TrackHead>
                <Badge><T w={52} s={11}>sparta_mul</T></Badge>
              </Line>
              <Line $h={36} $o={1942} $at={[1949, 1967]}>
                <Knob $s={17} $bg="radial-gradient(circle, #35b795 45%, #111 50%)" />
                <ParamTag><TagRow><T w={62} s={11}>receiver_cool</T></TagRow><TagRow><T w={30} s={11}>-1.776</T></TagRow></ParamTag>
              </Line>
              <SendDots><SendDot /><SendDot /><SendDot /></SendDots>
            </TrackMain>
          </Track>
          <EnvLane>
            <EnvPill>
              <Line $h={24} $o={1928} $at={[1929, 1952, 1968]}>
                <RecordButton $s={22} $a="#4fc2ad" $b="#1c7a69" $ring="#a5f2e2" /><Svg w={12}><circle cx="6" cy="6" r="6" fill="#888" /><path d="M6 1v5M3.500 3a4 4 0 1 0 5 0" stroke="#ddd" strokeWidth="1.200" /></Svg>
                <T w={136} s={13.5}>receiver_coordinate_y / s</T>
              </Line>
            </EnvPill>
          </EnvLane>
        </Stack>
      </TrackSide>
      <ArrangeSide>
        <RegionLane />
        <Ruler>
          {MARKS.map(([a, b, w]) => (
            <RulerMark key={a}><MarkTop><T w={w} s={14.5}>{a}</T></MarkTop><T w={48} s={12} f={VERDANA}>{b}</T></RulerMark>
          ))}
        </Ruler>
        <ArrangeRow>
          <ArrangeGrid>
            <MediaItem>
              <ItemHead>
                <Line $h={17} $o={2683} $at={[2696, 2714, 2732, 2752]}>
                  <Knob $s={14} /><SmallKey $w={15} $h={15} $bg="#888"><T w={10} s={11} b={700} c="#222">M</T></SmallKey>
                  <SmallKey $w={15} $h={15} $bg="#888"><T w={11} s={11} b={700} c="#222">FX</T></SmallKey>
                  <T w={162} s={12.5}>[-15.0dB] noise_1000sec.wav</T>
                </Line>
              </ItemHead>
              <Svg w={1157} h={134}>
                <path d="M0 0h1157v134H0z" fill="#c9c9c7" /><path d="M0 55h1157v25H0z" fill="#505050" />
                {range(75).map((i) => <path key={i} d={`M${1.5 + i * 15.4375} 0v55M${1.5 + i * 15.4375} 80v54`} stroke="#111" strokeDasharray="2 2" />)}
              </Svg>
            </MediaItem>
            <LaneLine $h={31} /><LaneLine $h={19} /><LaneLine $h={12} $bg="#44525c" /><LaneLine $h={2} />
          </ArrangeGrid>
          <VScroll>
            <RoundArrow><Svg w={7}><path d="M0 6l3.500-5L7 6z" fill="#aaa" /></Svg></RoundArrow>
            <VThumb />
            <RoundArrow><Svg w={7}><path d="M0 1l3.500 5L7 1z" fill="#aaa" /></Svg></RoundArrow>
            <Svg w={9}><path d="M4.500 0v9M0 4.500h9" stroke="#bbb" strokeWidth="1.500" /></Svg>
            <Svg w={9}><path d="M0 4.500h9" stroke="#bbb" strokeWidth="1.500" /></Svg>
          </VScroll>
        </ArrangeRow>
        <PlayCursor><Svg w={16} h={12}><path d="M0 0h15L7.500 11z" fill="#2c7a6b" /></Svg></PlayCursor>
        <EditCursor />
        <MarkerFlag><T s={12} b={600}>3</T></MarkerFlag>
      </ArrangeSide>
    </Workspace>
  );
}

/* ---------- transport and mixer ---------- */

const InfoRow = styled.div`
  height: 22px;
  display: flex;
  color: #9a9a9a;
`;
const InfoText = styled.div`
  width: 763px;
  padding-left: 2px;
  border-top: 1px solid #6a6a6a;
  display: flex;
  align-items: center;
`;
const HScroll = styled.div`
  flex: 1;
  padding: 0 12px 0 4px;
  display: flex;
  align-items: center;
  gap: 8px;
`;
const HThumb = styled.div`
  flex: 1;
  height: 13px;
  border-radius: 3px;
  background: #5b5b5b;
`;
const TransportRow = styled.div`
  height: 40px;
  color: #b2b2b2;
`;
const RateReadout = styled.div`
  width: 32px;
  display: flex;
  flex-direction: column;
  align-items: center;
  color: #999;
`;
const RoundKey = styled.div`
  width: ${(p) => p.$s}px;
  height: ${(p) => p.$s}px;
  border-radius: 50%;
  border: 1px solid #0e0e0e;
  background: ${(p) => p.$bg || "linear-gradient(#3a3a3a, #202020)"};
  display: flex;
  align-items: center;
  justify-content: center;
`;
const MixerArea = styled.div`
  height: 366px;
  display: flex;
  padding-left: 6px;
`;
const MasterStrip = styled.div`
  width: 94px;
  color: #ddd;
`;
const Centered = styled.div`
  height: ${(p) => p.$h || 18}px;
  display: flex;
  align-items: center;
  justify-content: center;
`;
const MasterPanel = styled.div`
  height: 318px;
  background: #262626;
`;
const MasterMeters = styled.div`
  display: flex;
  height: 281px;
`;
const ScaleArea = styled.div`
  width: 72px;
`;
const ScaleCols = styled.div`
  display: flex;
  justify-content: space-between;
  height: 244px;
  color: #7a7a7a;
`;
const ScaleCol = styled.div`
  padding-top: ${(p) => p.$pt || 0}px;
  width: 24px;
`;
const ScaleMark = styled.div`
  height: 23.2px;
  display: flex;
  align-items: center;
  justify-content: ${(p) => p.$j || "flex-start"};
`;
const FaderTrack = styled.div`
  width: 20px;
  height: ${(p) => p.$h}px;
  padding-top: ${(p) => p.$cap}px;
  background: linear-gradient(#050505, #050505) center / 3px 100% no-repeat;
`;
const FaderCap = styled.div`
  width: 20px;
  height: 42px;
  border-radius: 4px;
  border: 1px solid #111;
  background: linear-gradient(#6d7674, #e8eceb 12%, #5b6462 20%, #49524f 48%, #1a1a1a 50%, #c9b6ba 53%, #8d7a80 70%, #efe4e8 76%, #7a5d66 88%, #3a2b30);
`;
const KeyColumn = styled.div`
  width: 20px;
  margin-left: 6px;
`;
const MixKey = styled.div`
  width: 20px;
  height: ${(p) => p.$h || 18}px;
  border: 1px solid #151515;
  border-radius: 2px;
  background: ${(p) => p.$bg || "#2b2b2b"};
  color: ${(p) => p.$c || "#ccc"};
  display: flex;
  align-items: center;
  justify-content: center;
`;
const KeyLabel = styled.div`
  width: 20px;
  height: 12px;
  display: flex;
  align-items: center;
  justify-content: center;
  color: #c2c2c2;
`;
const Channel = styled.div`
  margin: 2px 0 0 6px;
  width: 116px;
  height: 364px;
  background: #262626;
  display: flex;
  flex-direction: column;
`;
const ChannelTop = styled.div`
  height: 80px;
  background: #818a86;
`;
const Pill = styled.div`
  width: ${(p) => p.$w}px;
  height: 20px;
  border-radius: 4px 10px 10px 4px;
  background: #5f6865;
  color: #e4e4e4;
  display: flex;
  align-items: center;
  justify-content: space-between;
  padding: 0 2px 0 6px;
`;
const ChannelControls = styled.div`
  height: 244px;
`;
const ChannelName = styled.div`
  height: 20px;
  color: #e2e2e2;
  display: flex;
  align-items: center;
  justify-content: center;
`;
const ChannelFoot = styled.div`
  height: 20px;
  background: #818a86;
  color: #ddd;
  display: flex;
  align-items: center;
  justify-content: center;
`;
const DockTabs = styled.div`
  height: 18px;
  background: #3e3e3e;
  color: #9a9a9a;
`;
const DockTab = styled.div`
  width: ${(p) => p.$w}px;
  height: 18px;
  display: flex;
  align-items: center;
  gap: 4px;
  padding-left: 6px;
  background: ${(p) => (p.$on ? "#87908c" : "#383838")};
  color: ${(p) => (p.$on ? "#222" : "#8a8a8a")};
  clip-path: polygon(0 0, 100% 0, calc(100% - 8px) 100%, 7px 100%);
`;

const RouteKey = () => <Svg w={20} h={19}><path d="M0 0h20v19H0z" fill="#1b2a2a" /><path d="M5 0h4L4 19H0z" fill="#27a98a" /><path d="M12 0h4l-5 19H7z" fill="#f0d429" /><path d="M17 0h3v6l-4 13h-4z" fill="#2d4a5c" /></Svg>;
const RouteKeyDim = () => <Svg w={20} h={19}><path d="M0 0h20v19H0z" fill="#16211f" /><path d="M5 0h4L4 19H0z" fill="#27a98a" /><path d="M12 0h4l-5 19H7z" fill="#6b4630" /><path d="M17 0h3v6l-4 13h-4z" fill="#1d4d46" /></Svg>;
const Tri = () => <Svg w={16}><circle cx="8" cy="8" r="8" fill="#929a97" /><path d="M4 5h8l-4 7z" fill="#fff" /></Svg>;
const TabX = ({ c }) => <Svg w={11}><path d="M.5.5h10v10H.5zM3 3l5 5M8 3L3 8" stroke={c} /></Svg>;

function Mixer() {
  const left = ["12", "6-", "0-", "6-", "12-", "18-", "24-", "30-", "36-", "42-"];
  const right = ["12", "6", "-0", "-6", "-12", "-18", "-24", "-30", "-36", "-42"];
  const mid = ["-6-", "-12-", "-18-", "-24-", "-30-", "-36-", "-42-", "-48-", "-54-"];
  return (
    <MixerArea>
      <MasterStrip>
        <Stack $o={1018} $at={[1022, 1038, 1066]}>
          <Centered $h={16}><T w={31} s={12}>center</T></Centered>
          <Centered $h={20}><Knob $s={20} $dot /></Centered>
          <MasterPanel>
            <Centered $h={19}><T w={33} s={12} c="#999">0.00dB</T></Centered>
            <MasterMeters>
              <ScaleArea>
                <Line $h={22} $o={1926} $at={[1936, 1971]}><T w={16} s={11}>-inf</T><T w={16} s={11}>-inf</T></Line>
                <ScaleCols>
                  <ScaleCol>{left.map((t, i) => <ScaleMark key={i}><T s={11}>{t}</T></ScaleMark>)}</ScaleCol>
                  <ScaleCol $pt={14}>{mid.map((t, i) => <ScaleMark key={i} $j="center"><T s={11}>{t}</T></ScaleMark>)}</ScaleCol>
                  <ScaleCol>{right.map((t, i) => <ScaleMark key={i} $j="flex-end"><T s={11}>{t}</T></ScaleMark>)}</ScaleCol>
                </ScaleCols>
                <Line $h={16} $o={1926} $at={[1933, 1971]}><T w={22} s={11} b={700} c="#2fa882">RMS</T><T w={16} s={11} c="#2fa882">-inf</T></Line>
              </ScaleArea>
              <Stack $o={1085} $at={[1095]}><FaderTrack $h={260} $cap={58}><FaderCap /></FaderTrack></Stack>
            </MasterMeters>
            <Centered><T w={42} s={12}>MASTER</T></Centered>
          </MasterPanel>
        </Stack>
      </MasterStrip>
      <KeyColumn>
        <Stack $o={1018} $at={[1026, 1048, 1063, 1083, 1108, 1130, 1147, 1166, 1189, 1210, 1228]}>
          <MixKey $bg="#8a8a8a" $h={19}><Svg w={14} h={10}><circle cx="5" cy="5" r="4" stroke="#444" /><circle cx="9" cy="5" r="4" stroke="#444" /></Svg></MixKey>
          <KeyLabel><T w={20} s={9} b={600}>MONO</T></KeyLabel>
          <MixKey $c="#c4553f"><T s={11} b={700}>M</T></MixKey>
          <MixKey $c="#c9bd3e"><T s={11} b={700}>S</T></MixKey>
          <RouteKey />
          <KeyLabel><T w={22} s={9} b={600}>ROUTE</T></KeyLabel>
          <MixKey $bg="#4a4a4a" $c="#eee"><T s={11}>FX</T></MixKey>
          <MixKey $bg="#777" $h={16}><PowerGlyph c="#ddd" /></MixKey>
          <MixKey $bg="#777"><EnvGlyph c="#333" /></MixKey>
          <KeyLabel><T w={18} s={9} b={600}>TRIM</T></KeyLabel>
          <MixKey><T s={13} b={700} f='"DejaVu Serif", serif'>i</T></MixKey>
        </Stack>
      </KeyColumn>
      <Channel>
        <ChannelTop>
          <Stack $o={1020} $at={[1026, 1050, 1073]}>
            <Line $h={20} $o={2052} $at={[2058]}><Pill $w={103}><T w={32} s={12}>Input 1</T><Tri /></Pill></Line>
            <Line $h={20} $o={2052} $at={[2058, 2143]}>
              <Pill $w={40}><T w={9} s={12}>in</T><Tri /></Pill>
              <Svg w={19}><path d="M0 0h19v19H0z" fill="#b5b9b7" stroke="#333" /><path d="M4 3v6M7 9V3l4 6V3M4 17v-6h3M4 14h3M11 11l4 6M15 11l-4 6" stroke="#333" strokeWidth="1.300" /></Svg>
            </Line>
            <Centered $h={20}><Knob $s={20} $dot /></Centered>
          </Stack>
        </ChannelTop>
        <ChannelControls>
          <Line $h={244} $o={2052} $align="start" $at={[2072, 2112, 2142]}>
            <Stack $o={1100} $at={[1108, 1316]}><T w={16} s={11} c="#8a8a8a">-inf</T><Svg w={16} h={14}><path d="M4 4h4l6-4v14L8 10H4z" fill="#8a8a8a" /></Svg></Stack>
            <Stack $o={1100} $at={[1115, 1312]}>
              <FaderTrack $h={186} $cap={38}><FaderCap /></FaderTrack>
              <RecordButton $s={22} />
            </Stack>
            <Stack $o={1100} $at={[1107, 1127, 1152, 1181, 1200, 1223, 1250]}>
              <MixKey $c="#c4553f"><T s={11} b={700}>M</T></MixKey>
              <MixKey $c="#c9bd3e"><T s={11} b={700}>S</T></MixKey>
              <RouteKeyDim />
              <MixKey $bg="#20805f" $c="#5fd8ad"><T s={11}>FX</T></MixKey>
              <MixKey $bg="#3cc592" $h={16}><PowerGlyph c="#0c4a34" /></MixKey>
              <MixKey $bg="#888"><EnvGlyph c="#333" /></MixKey>
              <RoundKey $s={15} $bg="#a9adab"><Svg w={7}><path d="M1 1h5v5H1zM1 6l5-5" stroke="#333" /></Svg></RoundKey>
            </Stack>
          </Line>
        </ChannelControls>
        <ChannelName><T w={46} s={14}>Process</T></ChannelName>
        <ChannelFoot><T w={6} s={13}>1</T></ChannelFoot>
      </Channel>
    </MixerArea>
  );
}

function Reaper() {
  return (
    <RightMonitor>
      <MenuArea>
        <Line $h={29} $o={1920} $at={[1922, 1947, 4325, 4383, 4442]}>
          <ReaperIcon s={21} /><T w={479} c="#999">01_NEW_ch16_100ms [modified] - REAPER v7.09 - EVALUATION LICENSE</T>
          <WinMin c="#777" /><WinRestore c="#777" /><WinClose c="#777" />
        </Line>
        <Line $h={25} $o={1920} $at={MENU.map((m) => m[1])}>{MENU.map(([t, , w]) => <T key={t} w={w}>{t}</T>)}</Line>
      </MenuArea>
      <Workarea />
      <InfoRow>
        <InfoText><T w={440} s={12.5}>Process receiver_coordinate_y / sparta_multi6DoFconv [shape] Linear [points] 1</T></InfoText>
        <HScroll>
          <RoundArrow><Svg w={7}><path d="M5 0v7L1 3.500z" fill="#aaa" /></Svg></RoundArrow><HThumb />
          <RoundArrow><Svg w={7}><path d="M2 0v7l4-3.500z" fill="#aaa" /></Svg></RoundArrow>
          <Svg w={11}><path d="M5.500 0v11M0 5.500h11" stroke="#bbb" strokeWidth="1.500" /></Svg>
          <Svg w={11}><path d="M0 5.500h11" stroke="#bbb" strokeWidth="1.500" /></Svg>
        </HScroll>
      </InfoRow>
      <TransportRow>
        <Line $h={40} $o={1920} $at={[1930, 1956, 1985, 2015, 2044, 2076, 2102, 2139, 2504, 4384, 4426]}>
          <RoundKey $s={23}><Svg w={9}><path d="M0 0h2v9H0zM9 0v9L2 4.500z" fill="#ccc" /></Svg></RoundKey>
          <RoundKey $s={23}><Svg w={9}><path d="M7 0h2v9H7zM0 0v9l7-4.500z" fill="#ccc" /></Svg></RoundKey>
          <RecordButton $s={28} />
          <RoundKey $s={28} $bg="linear-gradient(120deg, #c8cccb, #b9a3a8)"><Svg w={10} h={12}><path d="M0 0l10 6-10 6z" fill="#222" /></Svg></RoundKey>
          <RoundKey $s={23} $bg="#14b07c"><Svg w={14}><path d="M3 9a4.500 4.500 0 0 1 4-6.500l1 0M11 5a4.500 4.500 0 0 1-4 6.500" stroke="#fff" strokeWidth="2" /></Svg></RoundKey>
          <RoundKey $s={23}><Svg w={8}><path d="M0 0h8v8H0z" fill="#bbb" /></Svg></RoundKey>
          <RoundKey $s={23}><Svg w={8} h={9}><path d="M0 0h3v9H0zM5 0h3v9H5z" fill="#ccc" /></Svg></RoundKey>
          <T w={194} s={22} b={700}>25.1.00 / 0:48.000</T><T w={74} s={15}>[Stopped]</T>
          <Knob $s={22} $dot $bg="radial-gradient(circle at 40% 25%, #8a8f8e, #555 70%)" />
          <RateReadout><T w={24} s={11}>Rate:</T><T w={15} s={11}>1.0</T></RateReadout>
        </Line>
      </TransportRow>
      <Mixer />
      <DockTabs>
        <Line $h={18} $o={1920} $at={[1924, 1931, 2004, 2114]}>
          <T s={14} b={700} c="#eee">!</T>
          <DockTab $w={73} $on><TabX c="#222" /><T w={36} s={13} b={700} f={ARIAL}>Mixer</T></DockTab>
          <DockTab $w={110}><TabX c="#999" /><T w={73} s={13} f={ARIAL}>Performance</T></DockTab>
          <DockTab $w={122}><TabX c="#999" /><T w={84} s={13} f={ARIAL}>Routing Matrix</T></DockTab>
        </Line>
      </DockTabs>
      <Taskbar tray={<Tray />} />
    </RightMonitor>
  );
}

/* ---------- dialogs ---------- */

const Floating = styled.div`
  position: absolute;
  left: ${(p) => p.$x}px;
  top: ${(p) => p.$y}px;
  width: ${(p) => p.$w}px;
  height: ${(p) => p.$h}px;
  background: #f0f0f0;
  box-shadow: 0 0 0 1px #8a8a8a, 0 5px 14px rgba(0, 0, 0, 0.45);
  font-family: ${ARIAL};
  color: #111;
  overflow: hidden;
`;
const TitleBand = styled.div`
  height: ${(p) => p.$h}px;
  background: #fff;
  font-family: ${SEGOE};
  color: #999;
`;
const CheckBox = styled.div`
  width: 16px;
  height: 16px;
  border: 1.5px solid ${(p) => (p.$dim ? "#c4c4c4" : "#333")};
  background: #fff;
  display: flex;
  align-items: center;
  justify-content: center;
`;
const Check = ({ on, dim }) => (
  <CheckBox $dim={dim}>{on && <Svg w={11} h={9}><path d="M1 4l3.500 4L10 .5" stroke="#222" strokeWidth="1.400" /></Svg>}</CheckBox>
);
const PushButton = styled.div`
  width: ${(p) => p.$w}px;
  height: ${(p) => p.$h || 24}px;
  background: ${(p) => (p.$dim ? "#ccc" : "#e1e1e1")};
  border: 1px solid ${(p) => (p.$dim ? "#bfbfbf" : "#adadad")};
  color: ${(p) => (p.$dim ? "#838383" : "#111")};
  display: flex;
  align-items: center;
  justify-content: center;
`;
const Select = styled.div`
  width: ${(p) => p.$w}px;
  height: 24px;
  background: #e1e1e1;
  border: 1px solid #adadad;
  display: flex;
  align-items: center;
  justify-content: space-between;
  padding: 0 4px 0 3px;
`;
const Field = styled.div`
  width: ${(p) => p.$w}px;
  height: 24px;
  background: ${(p) => (p.$dim ? "#f0f0f0" : "#fff")};
  border: 1px solid ${(p) => (p.$dim ? "#ccc" : "#7a7a7a")};
  color: ${(p) => (p.$dim ? "#777" : "#111")};
  display: flex;
  align-items: center;
  justify-content: ${(p) => (p.$end ? "flex-end" : "flex-start")};
  padding: 0 2px;
`;
const Group = styled.div`
  margin-left: ${(p) => p.$ml}px;
  width: ${(p) => p.$w}px;
  height: ${(p) => p.$h}px;
  border: 1px solid #dcdcdc;
`;
const Legend = styled.div`
  display: table;
  margin: -11px 0 0 ${(p) => p.$ml || 8}px;
  height: 20px;
  background: #f0f0f0;
`;
const SliderBed = styled.div`
  width: ${(p) => p.$w}px;
  height: 25px;
  border-radius: 10px;
  background: #cacaca;
  padding: 10px 9px;
`;
const Groove = styled.div`
  height: 5px;
  border-radius: 2px;
  background: #585858;
  display: flex;
  align-items: center;
`;
const SliderKnob = styled.div`
  flex: none;
  width: 19px;
  height: 24px;
  margin-left: ${(p) => p.$at}px;
  border-radius: 50%;
  border: 2px solid #555;
  background: linear-gradient(90deg, #777, #fff 40%, #ccc 60%, #8a8a8a);
`;
const Progress = styled.div`
  width: ${(p) => p.$w}px;
  height: 12px;
  background: #e6e6e6;
  border: 1px solid #bcbcbc;
  display: flex;
`;
const ProgressFill = styled.div`
  width: ${(p) => p.$w}px;
  background: ${(p) => p.$bg || "#06b025"};
`;
const Radio = styled.div`
  width: 16px;
  height: 16px;
  border-radius: 50%;
  border: 1px solid #333;
  background: #fff;
`;
const GhostClose = styled.div`
  width: 25px;
  height: 25px;
  background: #ececec;
`;

/* text size shared by the dialogs */
const DS = 14;

function ParameterDialog() {
  const o = 2104;
  return (
    <Floating $x={2104} $y={303} $w={454} $h={439}>
      <TitleBand $h={31}>
        <Line $h={31} $o={o} $at={[2107, 2531]}>
          <T w={420} s={15.5}>Parameter Modulation/Link for receiver_coordinate_y / sparta_...</T><GhostClose />
        </Line>
      </TitleBand>
      <Stack $o={334} $at={[347, 371, 405, 429, 456, 481, 514, 546, 578, 615, 643, 683, 714]}>
        <Line $o={o} $at={[2120, 2139]}><Check on /><T w={402} s={DS}>Enable parameter modulation, baseline value (envelope overrides):</T></Line>
        <Line $h={25} $o={o} $at={[2120]}><SliderBed $w={433}><Groove><SliderKnob $at={197} /></Groove></SliderBed></Line>
        <Line $o={o} $at={[2120, 2176]}><T w={41} s={DS}>Output:</T><Progress $w={377}><ProgressFill $w={75} $bg="linear-gradient(90deg, #7fe67f, #0bb427 70%)" /></Progress></Line>
        <Line $o={o} $at={[2120, 2139]}><Check /><T w={98} s={DS}>Audio control sig</T></Line>
        <Line $o={o} $at={[2120, 2139]}><Check on /><T w={24} s={DS}>LFO</T></Line>
        <Line $o={o} $at={[2126, 2198]}><T w={43} s={DS}>Shape:</T><Select $w={80}><T w={46} s={DS}>triangle</T></Select></Line>
        <Line $h={25} $o={o} $at={[2126, 2198]}><T w={44} s={DS}>Speed:</T><SliderBed $w={90}><Groove /></SliderBed></Line>
        <Line $h={25} $o={o} $at={[2126, 2198]}><T w={52} s={DS}>Strength:</T><SliderBed $w={90}><Groove /></SliderBed></Line>
        <Line $h={25} $o={o} $at={[2126, 2198]}><T w={42} s={DS}>Phase:</T><SliderBed $w={90}><Groove><SliderKnob $at={-5} /></Groove></SliderBed></Line>
        <Line $o={o} $at={[2126, 2216]}><T w={56} s={DS}>Direction:</T><Radio /></Line>
        <Line $h={24} $o={o} $at={[2126, 2216]}><T w={74} s={DS}>Phase reset:</T><Select $w={60}><T w={17} s={DS}>On</T></Select></Line>
        <Line $h={12} $o={o} $at={[2198]}><Progress $w={80}><ProgressFill $w={3} /></Progress></Line>
        <Line $o={o} $at={[2120, 2139]}><Check /><T w={98} s={DS}>Link from MIDI or</T></Line>
      </Stack>
    </Floating>
  );
}

const MeterBox = styled.div`
  position: relative;
  width: 662px;
  height: 160px;
  background: linear-gradient(90deg, #004646, #004e42 55%, #006233 91%, #450b00 91%);
  overflow: hidden;
`;
const MeterText = styled.div`
  height: 10px;
  display: grid;
  grid-template-columns: repeat(10, 58.4px) 1fr;
  padding-left: 10px;
`;
const MeterCell = styled.div`
  height: 10px;
  display: flex;
  align-items: center;
  color: ${(p) => p.$c};
  justify-content: ${(p) => (p.$end ? "flex-end" : "flex-start")};
  padding-right: ${(p) => (p.$end ? 4 : 0)}px;
`;
const PeakLayer = styled.div`
  position: absolute;
  inset: 0;
`;
const DB = [-60, -54, -48, -42, -36, -30, -24, -18, -12, -6];
const LEVELS = ["-19.2", "-26.0", "-29.3", "-20.7", "-23.7", "-30.0", "-26.9", "-28.5", "-24.2", "-23.5", "-28.8", "-31.7", "-30.0", "-27.2", "-31.1", "-26.2"];
const PEAKS = [[1, 347], [4, 373], [5, 296], [6, 340], [7, 327], [8, 364], [10, 324], [11, 291], [12, 304], [13, 332], [14, 296], [15, 344]];
const dbColor = (i) => { const v = 92 + i * 15; return `rgb(${v}, ${Math.min(v + 22, 248)}, ${v + 12})`; };

const FullField = styled.div`
  width: 827px;
  height: 24px;
  border: 1.5px solid #777;
  display: flex;
  align-items: center;
  padding-left: 2px;
`;
const GreenBar = styled.div`
  width: 811px;
  height: 16px;
  background: #06b025;
  border: 1px solid #6cc97b;
`;

function FinishedDialog() {
  const o = 2237;
  const fx = o + 15;
  return (
    <Floating $x={2237} $y={424} $w={892} $h={493}>
      <TitleBand $h={37}>
        <Line $h={37} $o={o} $at={[2246, 2271, 2975, 3033, 3092]}>
          <ReaperIcon s={21} /><T w={220}>{"Finished in 0:08    (36.3x realtime)"}</T>
          <WinMin c="#888" /><WinMax c="#ddd" /><WinClose c="#777" />
        </Line>
      </TitleBand>
      <Stack $o={461} $at={[483, 579, 848, 881]}>
        <Group $ml={14} $w={862} $h={76}>
          <Legend><T w={58} s={DS}>Output file</T></Legend>
          <Stack $o={493} $at={[497, 526]}>
            <Line $h={24} $o={fx} $at={[2263]}><FullField><T w={103} s={DS}>Dry run, no output</T></FullField></Line>
            <Line $o={fx} $at={[2610]}><T w={133} s={DS}>Dry run: 48000Hz, 16ch</T></Line>
          </Stack>
        </Group>
        <Group $ml={14} $w={862} $h={246}>
          <Legend><T w={82} s={DS}>Render status</T></Legend>
          <Stack $o={589} $at={[597, 624, 653]}>
            <Line $h={16} $o={fx} $at={[2277]}><GreenBar /></Line>
            <Line $o={fx} $at={[2580]}><T w={192} s={DS}>{"Finished in 0:08    (36.3x realtime)"}</T></Line>
            <Line $h={160} $o={fx} $at={[2370, 2442]}>
              <T w={64} s={DS}>Master mix</T>
              <MeterBox>
                {LEVELS.map((lv, r) => (
                  <MeterText key={r}>
                    {DB.map((d, i) => <MeterCell key={d} $c={dbColor(i)}><T w={d === -6 ? 11 : 18} s={12.5}>{d}</T></MeterCell>)}
                    <MeterCell $c="#f4e6d6" $end><T w={28} s={12.5}>{lv}</T></MeterCell>
                  </MeterText>
                ))}
                <PeakLayer>
                  <Svg w={662} h={160}>{PEAKS.map(([r, x]) => <path key={r} d={`M${x} ${r * 10}v10`} stroke="#35e09a" />)}</Svg>
                </PeakLayer>
              </MeterBox>
            </Line>
          </Stack>
        </Group>
        <Line $h={26} $o={o} $at={[2987]}><PushButton $w={126} $h={26}><T w={72} s={DS}>Stats/Charts</T></PushButton></Line>
        <Line $h={26} $o={o} $at={[2987]}><PushButton $w={126} $h={26}><T w={34} s={DS}>Close</T></PushButton></Line>
      </Stack>
    </Floating>
  );
}

const FormatBox = styled.div`
  margin-left: 14px;
  width: 643px;
  height: 144px;
  border: 2px solid #fff;
  outline: 1px solid #dcdcdc;
`;

function RenderDialog() {
  const o = 2705;
  const g = o + 15;
  const arrow = <Chev s={10} c="#444" sw={1.2} />;
  return (
    <Floating $x={2705} $y={228} $w={672} $h={835}>
      <TitleBand $h={31}>
        <Line $h={31} $o={o} $at={[2708, 2734, 3350]}><ReaperIcon s={20} /><T w={91}>Render to File</T><WinClose c="#777" /></Line>
      </TitleBand>
      <Stack $o={259} $at={[273, 311, 373, 495, 758, 915, 938, 961, 990, 1027]}>
        <Line $h={24} $o={o} $at={[2719, 2775, 3023, 3085, 3282]}>
          <T w={46} s={DS}>Source:</T><Select $w={240}><T w={64} s={DS}>Master mix</T>{arrow}</Select>
          <T w={49} s={DS}>Bounds:</T><Select $w={190}><T w={79} s={DS}>Entire project</T>{arrow}</Select>
          <PushButton $w={80} $h={22}><T w={46} s={DS}>Presets</T></PushButton>
        </Line>
        <Group $ml={14} $w={644} $h={48}>
          <Legend><T w={78} s={DS}>Time bounds</T></Legend>
          <Line $h={30} $o={g} $at={[2729, 2770, 2859, 2899, 2989, 3045, 3193, 3213, 3253, 3323]}>
            <T w={30} s={DS} c="#8a8a8a">Start:</T><Field $w={81} $dim><T w={48} s={DS}>0:00.000</T></Field>
            <T w={26} s={DS} c="#8a8a8a">End:</T><Field $w={84} $dim><T w={48} s={DS}>5:00.000</T></Field>
            <T w={41} s={DS} c="#8a8a8a">Length:</T><Field $w={80} $dim><T w={48} s={DS}>5:00.000</T></Field>
            <Check /><T w={25} s={DS}>Tail:</T><Field $w={62} $dim><T w={28} s={DS}>1000</T></Field><T w={18} s={DS}>ms</T>
          </Line>
        </Group>
        <Group $ml={14} $w={644} $h={110}>
          <Legend><T w={38} s={DS}>Output</T></Legend>
          <Stack $o={383} $at={[387, 419, 451]}>
            <Line $h={24} $o={g} $at={[2735, 2807, 3264]}><T w={57} s={DS}>Directory:</T><Field $w={450} $end><T w={444} s={DS}>s\cimil\Develop\SPARTA\MEASURES\PAPER_PERF\Media\output\64spl</T></Field><PushButton $w={86}><T w={54} s={DS}>Browse...</T></PushButton></Line>
            <Line $h={24} $o={g} $at={[2807, 3264]}><Field $w={450} /><PushButton $w={86}><T w={61} s={DS}>Wildcards</T></PushButton></Line>
            <Line $h={24} $o={g} $at={[2807, 3264]}><Field $w={450} $end><T w={128} s={DS}>5-01-21 09_36_27.wav</T></Field><PushButton $w={86} $dim><T w={27} s={DS}>1 file</T></PushButton></Line>
          </Stack>
        </Group>
        <Group $ml={14} $w={644} $h={235}>
          <Stack $o={496} $at={[509, 545, 572, 605, 627, 653, 674, 699]}>
            <Line $h={24} $o={g} $at={[3031, 3181]}><Select $w={100} /><Select $w={170}><T w={104} s={DS}>Full-speed Offline</T>{arrow}</Select></Line>
            <Line $o={g} $at={[3126, 3146]}><Check /><T w={97} s={DS}>2nd pass render</T></Line>
            <Line $h={24} $o={g} $at={[3069, 3182]}><Select $w={100}><span />{arrow}</Select><PushButton $w={168}><T w={128} s={DS}>Normalize/Limit/Fade</T></PushButton></Line>
            <Line $o={g} $at={[3128, 3201, 3220]}><T w={11} s={DS}>er</T><Check dim /><T w={74} s={DS} c="#7c7c7c">Dither stems</T></Line>
            <Line $o={g} $at={[3129, 3201, 3220]}><T w={52} s={DS}>e master</T><Check dim /><T w={116} s={DS} c="#7c7c7c">Noise shape stems</T></Line>
            <Line $o={g} $at={[3127]}><T w={117} s={DS} c="#7c7c7c">ped stretch markers</T></Line>
            <Line $o={g} $at={[3127]}><T w={104} s={DS} c="#7c7c7c">ped take markers</T></Line>
            <Line $h={24} $o={g} $at={[3122, 3256]}><T w={95} s={DS}>d new metadata</T><PushButton $w={94} $dim><T w={66} s={DS}>Metadata...</T></PushButton></Line>
          </Stack>
        </Group>
        <FormatBox>
          <Stack $o={760} $at={[770, 802, 836, 862]}>
            <Line $h={24} $o={g + 1} $at={[3019]}><Select $w={200}><span />{arrow}</Select></Line>
            <Line $h={24} $o={g + 1} $at={[3113]}><Select $w={142}><T w={67} s={DS}>WAV/RF64</T>{arrow}</Select></Line>
            <Line $o={g + 1} $at={[3128]}><T w={37} s={DS}>F data</T></Line>
            <Line $o={g + 1} $at={[3124]}><T w={14} s={DS}>oo</T></Line>
          </Stack>
        </FormatBox>
        <Line $o={o} $at={[2719, 2738, 3061, 3080]}><Check /><T w={283} s={DS}>Silently increment filenames to avoid overwriting</T><Check /><T w={255} s={DS}>Add rendered items to new tracks in project</T></Line>
        <Line $o={o} $at={[2719, 2738, 3061, 3080]}><Check /><T w={223} s={DS}>Do not render files that are likely silent</T><Check /><T w={232} s={DS}>Save copy of project to outfile.wav.RPP</T></Line>
        <Line $o={o} $at={[3061, 3080]}><Check /><T w={174} s={DS}>Save outfile.render_stats.html</T></Line>
        <Line $h={26} $o={o} $at={[2718, 3036, 3204]}><PushButton $w={158} $h={26}><T w={112} s={DS}>Queued Renders...</T></PushButton><PushButton $w={158} $h={26}><T w={113} s={DS}>Dry Run (no output)</T></PushButton><PushButton $w={158} $h={26}><T w={75} s={DS}>Render 1 file</T></PushButton></Line>
        <Line $h={26} $o={o} $at={[3150, 3244]}><PushButton $w={84} $h={26}><T w={42} s={DS}>Cancel</T></PushButton><PushButton $w={118} $h={26} $dim><T w={82} s={DS}>Save Settings</T></PushButton></Line>
      </Stack>
    </Floating>
  );
}

/* ---------- convolver plugin window ---------- */

const FxTitle = styled.div`
  height: 60px;
  background: #fff;
`;
const FxBottom = styled.div`
  display: flex;
`;
const CpuCell = styled.div`
  width: 281px;
  padding: 601px 0 0 4px;
`;
const Plugin = styled.div`
  width: 1071px;
  height: 624px;
  border: 3px solid #a9b2b6;
  border-radius: 5px;
  background: #021015;
  font-family: ${VERDANA};
  color: #fff;
`;
const PluginHead = styled.div`
  height: 38px;
  border-bottom: 2px solid #a9b2b6;
  border-radius: 3px;
  background: linear-gradient(90deg, #07141a 20%, #0c1f28 40%, #17303f 70%);
`;
const PluginBody = styled.div`
  height: 580px;
  display: flex;
  background: linear-gradient(#17303f, #0b1c22 20%, #020f14 45%, #03141a 62%, #0b1d26 80%, #1c3546);
`;
const PluginLeft = styled.div`
  width: 496px;
`;
const Pane = styled.div`
  width: ${(p) => p.$w || 496}px;
  height: ${(p) => p.$h}px;
  border: 1.5px solid #47575d;
  background: rgba(60, 72, 74, 0.22);
`;
const Box = styled.div`
  width: ${(p) => p.$w}px;
  height: ${(p) => p.$h || 25}px;
  border: 1.5px solid ${(p) => p.$bc || "#46565c"};
  background: ${(p) => p.$bg || "transparent"};
  color: ${(p) => p.$c || "#fff"};
  border-radius: ${(p) => p.$r || 0}px;
  display: flex;
  align-items: center;
  justify-content: ${(p) => p.$j || "flex-start"};
  padding: 0 ${(p) => (p.$j === "center" ? 0 : 6)}px;
`;
const CoordColumn = styled.div`
  width: 550px;
  margin-left: 9px;
`;
const Column = styled.div`
  width: ${(p) => p.$w}px;
  height: ${(p) => p.$h}px;
  border-left: ${(p) => (p.$line ? "1.5px solid #47575d" : "0 none")};
  background: ${(p) => (p.$line ? "rgba(80,92,95,.18)" : "transparent")};
`;
const RoundToggle = styled.div`
  width: 17px;
  height: 17px;
  border-radius: 50%;
  border: 1px solid #777;
  background: #2c2c2c;
  display: flex;
  align-items: center;
  justify-content: center;
`;
const ArrowGap = styled.div`
  padding: 0 7px 0 18px;
`;
const MoreKey = styled.div`
  width: 37px;
  height: 25px;
  border: 1.5px solid #dfe5e8;
  border-radius: 0 13px 13px 0;
  display: flex;
  align-items: center;
  justify-content: center;
`;
const ParamCols = styled.div`
  display: flex;
  padding-top: 6px;
`;
const ParamRows = styled.div`
  width: 242px;
`;
const SideRows = styled.div`
  width: 252px;
`;
const SizePane = styled.div`
  width: 253px;
  height: 63px;
  border: 1.5px solid #47575d;
  background: rgba(80, 92, 84, 0.2);
  padding-top: 3px;
`;
const DialValue = styled.div`
  width: 72px;
  height: 19px;
  border: 1.5px solid #8f9a9e;
  display: flex;
  align-items: center;
  justify-content: center;
`;
const PlotArea = styled.div`
  position: relative;
  height: 110px;
`;
const PlotLabel = styled.div`
  position: absolute;
  left: ${(p) => p.$x}px;
  top: ${(p) => p.$y}px;
  color: ${(p) => p.$c || "#b9c1c4"};
`;
const Dial = () => (
  <Svg w={64} h={58}>
    <path d="M32 31.500V1a30.500 30.500 0 0 0-18 55z" fill="#aeb3b3" />
    <path d="M32 31.500L14 56A30.500 30.500 0 1 1 50 56z" stroke="#b5baba" strokeWidth="1.500" />
  </Svg>
);

const Bold = ({ w, s = 15, children }) => <T w={w} s={s} b={700} f={VERDANA}>{children}</T>;
const V = ({ w, s = 15, c, children }) => <T w={w} s={s} c={c} f={VERDANA}>{children}</T>;

const ROWS_A = [["ck Size:", 3373, 63, "1024", 38], ["sitions:", 3377, 62, "3", 9], ["pos:", 3380, 36, "16", 18], ["s:", 3377, 14, "1", 9], ["uts:", 3373, 31, "16", 18]];
const ROWS_B = [["IR Length [s]:", 122, "0.1", 23], ["Filter Samplerate:", 155, "48000", 48], ["Host Samplerate:", 150, "48000", 48]];
const PLOT_LABELS = [["3.6", 8, 64, 20], ["1.6", 136, 64, 20], ["-0.4", 261, 64, 25], ["-2.4", 388, 64, 25], ["1.2", 402, 49, 20], ["Y", 215, 79, 9]];

function PluginWindow() {
  const o = 3280;
  const arrow = (c = "#ddd") => <Chev s={15} c={c} sw={1.4} />;
  return (
    <Floating $x={2996} $y={326} $w={1356} $h={753}>
      <FxTitle>
        <Line $h={34} $o={2996} $at={[4272, 4326]}>
          <Svg w={14} h={17}><path d="M2 1h10M4 1v7l-3 3h12l-3-3V1M7 11v6" stroke="#888" strokeWidth="1.300" /></Svg><GhostClose />
        </Line>
      </FxTitle>
      <Stack $o={386} $at={[391, 422, 453]}>
        <Line $h={24} $o={2996} $at={[3001, 4325]}><Field $w={1317} /><PushButton $w={24} $h={22}><T s={DS}>...</T></PushButton></Line>
        <Line $h={25} $o={2996} $at={[3001, 4061, 4089, 4153, 4257, 4294, 4324]}>
          <Select $w={1053}><span /><Chev s={10} c="#444" sw={1.2} /></Select><PushButton $w={22} $h={22}><T s={DS}>+</T></PushButton>
          <PushButton $w={58} $h={22}><T w={39} s={DS}>Param</T></PushButton><PushButton $w={98} $h={22}><T w={70} s={DS}>16/64 in+out</T></PushButton>
          <PushButton $w={32} $h={22}><T w={13} s={DS}>UI</T></PushButton>
          <Svg w={25}><circle cx="12.500" cy="12.500" r="11.500" fill="#c9d2cf" stroke="#777" strokeWidth="1.500" /><path d="M13 13l4 7" stroke="#222" strokeWidth="1.500" /></Svg>
          <Check on />
        </Line>
        <FxBottom>
          <CpuCell><T w={124} s={13.5}>0.0%c/0.0%c 0/0 spls</T></CpuCell>
          <Plugin>
            <PluginHead>
              <Line $h={36} $o={o} $at={[3366, 3383, 3391, 3575, 3913]}>
                <Bold s={19} w={14}>A</Bold><Bold s={19} w={8}>|</Bold><T w={167} s={18.5} b={700} c="#8a10ff" f={VERDANA}>MCFX-6DoFconv</T>
                <V w={313} s={13}>6DoF Convolver with the MCFX convolution engine</V>
                <V w={285} s={12}>Ver 1.0.0alpha, Build Date Nov 21 2024 17:26:29</V>
              </Line>
            </PluginHead>
            <PluginBody>
              <PluginLeft>
                <Stack $o={494} $at={[504, 525, 559, 718, 778, 799, 866, 901, 921]}>
                  <Line $o={o} $at={[3376, 3445]}><Bold w={59}>dataset</Bold><V w={93} s={12.5}>SOFA file loaded</V></Line>
                  <Pane $h={35}>
                    <Line $h={32} $o={o + 1} $at={[3300, 3732]}>
                      <Box $w={431} $bg="#232f33" $r={2} $j="flex-end"><V w={306} s={14}>arina-proj\MATRICES(hrtf-and-SOFA)\SOFA\creat…</V><ArrowGap><Chev s={18} c="#eee" /></ArrowGap></Box>
                      <MoreKey>...</MoreKey>
                    </Line>
                  </Pane>
                  <Pane $h={153}>
                    <ParamCols>
                      <ParamRows>
                        {ROWS_A.map(([t, x, w, v, vw]) => (
                          <Line key={t} $h={27.5} $o={o + 1} $at={[x, 3445]}><Bold w={w}>{t}</Bold><Box $w={75}><V w={vw}>{v}</V></Box></Line>
                        ))}
                      </ParamRows>
                      <SideRows>
                        {ROWS_B.map(([t, w, v, vw]) => (
                          <Line key={t} $h={27.5} $o={3523} $at={[3529, 3692]}><Bold w={w}>{t}</Bold><Box $w={76}><V w={vw}>{v}</V></Box></Line>
                        ))}
                        <SizePane>
                          <Line $h={27.5} $o={3524} $at={[3529, 3692]}><Bold w={154}>1st Partition Size:</Bold><Box $w={76} $r={4} $bg="#25333a" $bc="#8d999e" $j="space-between"><V w={31} s={12}>1024</V>{arrow()}</Box></Line>
                          <Line $h={27.5} $o={3524} $at={[3529, 3692]}><Bold w={162}>Max Partition Size:</Bold><Box $w={76} $r={4} $bg="#10191a" $bc="#8d999e" $j="space-between"><V w={31} s={12} c="#444">8192</V>{arrow()}</Box></Line>
                        </SizePane>
                      </SideRows>
                    </ParamCols>
                  </Pane>
                  <Pane $h={54}>
                    <Line $h={24} $o={o + 1} $at={[3420, 3489, 3557]}><Bold>x</Bold><Bold>y</Bold><Bold>z</Bold></Line>
                    <Line $h={26} $o={o + 1} $at={[3392, 3462, 3532]}>
                      {[["1.5", 24], ["-1.0", 32], ["1.6", 24]].map(([v, w]) => <Box key={v} $w={61} $bg="#26323a" $bc="#6a767b" $c="#8d979b" $j="center"><V w={w}>{v}</V></Box>)}
                    </Line>
                  </Pane>
                  <Line $o={o} $at={[3410]}><Bold w={245}>Target Listener Position [m]</Bold></Line>
                  <Pane $h={60}>
                    <Line $h={57} $o={o + 1} $align="start" $at={[3281, 3600, 3687]}>
                      <Column $w={319} $h={57}>
                        <Line $h={28} $o={o + 1} $at={[3420, 3489, 3557]}><Bold>x</Bold><Bold>y</Bold><Bold>z</Bold></Line>
                        <Line $h={26} $o={o + 1} $at={[3392, 3462, 3532]}>
                          <Box $w={61} $bg="#1c282d" $bc="#6a767b" $c="#8d979b" $j="center"><V w={44}>0.000</V></Box>
                          <Box $w={61} $bg="linear-gradient(#25323a 75%, #23566b 75%)" $bc="#a4afb3" $j="center"><V w={48}>-1.776</V></Box>
                          <Box $w={61} $bg="#43545b" $bc="#6f8188" $c="#9aa6aa" $j="center"><V w={44}>1.000</V></Box>
                        </Line>
                      </Column>
                      <Column $w={87} $h={57} $line>
                        <Line $h={28} $o={3601} $at={[3619]}><Bold w={47} s={14}>Index</Bold></Line>
                        <Line $h={26} $o={3601} $at={[3612]}><Box $w={61}><V w={9}>0</V></Box></Line>
                      </Column>
                      <Column $w={86} $h={57} $line>
                        <Line $h={28} $o={3688} $at={[3694]}><Bold w={72} s={14}>OSC Port</Bold></Line>
                        <Line $h={26} $o={3688} $at={[3705]}><Box $w={53} $j="center"><V w={36} s={14.5}>9000</V></Box></Line>
                      </Column>
                    </Line>
                  </Pane>
                  <Pane $h={32}>
                    <Line $h={29} $o={o + 1} $at={[3376, 3490]}><Bold w={108}>e Time [ms]:</Bold><Box $w={210} $bc="#6d797e" $c="#7d888c" $j="center"><V w={34}>21.3</V></Box></Line>
                  </Pane>
                  <Line $o={o} $at={[3377]}><Bold w={337}>bisonic Sound-Field Rotation [degrees]</Bold></Line>
                  <Pane $h={146}>
                    <Line $h={143} $o={o + 1} $align="start" $at={[3281, 3504]}>
                      <Column $w={222} $h={143}>
                        <Stack $o={922} $at={[930, 960, 989, 1009, 1029]}>
                          <Line $o={o + 1} $at={[3378]}><Bold w={90}>e Rotation</Bold></Line>
                          <Line $h={18} $o={o + 1} $at={[3386]}><RoundToggle><Svg w={12} h={14}><path d="M2 7l3 5 5-11" stroke="#fff" strokeWidth="2" /></Svg></RoundToggle></Line>
                          <Line $o={o + 1} $at={[3377]}><Bold w={109} s={12.5}>t this rotation is</Bold></Line>
                          <Line $o={o + 1} $at={[3374]}><Bold w={108} s={12.5}>able if you have</Bold></Line>
                          <Line $o={o + 1} $at={[3374]}><Bold w={101} s={12.5}>Ambisonic IRs)</Bold></Line>
                        </Stack>
                      </Column>
                      <Column $w={271} $h={143} $line>
                        <Stack $o={922} $at={[928, 949, 1013, 1038]}>
                          <Line $o={3505} $at={[3529, 3562, 3613, 3648, 3692, 3719]}>
                            <Bold w={29} s={12}>Yaw</Bold><V w={38} s={12}>/ypr[0]</V><Bold w={34} s={12}>Pitch</Bold><V w={37} s={12}>/ypr[1]</V><Bold w={26} s={12}>Roll</Bold><V w={37} s={12}>/ypr[2]</V>
                          </Line>
                          <Line $h={58} $o={3505} $at={[3530, 3609, 3688]}><Dial /><Dial /><Dial /></Line>
                          <Line $h={20} $o={3505} $at={[3527, 3605, 3684]}>{[0, 1, 2].map((i) => <DialValue key={i}><V w={35} s={14}>0.00</V></DialValue>)}</Line>
                          <Line $o={3505} $at={[3537, 3570, 3617, 3649, 3697, 3728]}>{[0, 1, 2].map((i) => <React.Fragment key={i}><Bold w={28} s={14}>+/-</Bold><RoundToggle /></React.Fragment>)}</Line>
                        </Stack>
                      </Column>
                    </Line>
                  </Pane>
                </Stack>
              </PluginLeft>
              <CoordColumn>
                <Stack $o={494} $at={[500, 525]}>
                  <Line $h={22} $o={3785} $align="start" $at={[3964, 4219]}>
                    <Line $h={27} $at={[0]}><Bold w={179}>Coordinate View [m]</Bold></Line>
                    <Box $w={114} $h={20} $r={3} $bg="#14232b" $bc="#7b888e" $j="space-between"><V w={64} s={13}>Side View</V><Chev s={18} c="#eee" /></Box>
                  </Line>
                  <Pane $w={550} $h={541}>
                    <PlotArea>
                      <Svg w={547} h={110}>
                        <path d="M13 15h382v45H13z" fill="#1a2a2f" />
                        {range(14).map((i) => <path key={i} d={`M${38 + i * 25.5} 15v45`} stroke={i % 5 === 4 ? "#7a868b" : "#2f4046"} />)}
                        <path d="M13 35h382" stroke="#2f4046" />
                        <path d="M13 15h382v45H13z" stroke="#dfe5e8" strokeWidth="2.500" />
                        <circle cx="50" cy="41" r="7.500" fill="#0f5f61" stroke="#1f7f80" />
                        <circle cx="241" cy="40" r="7.500" fill="#0f5f61" stroke="#1f7f80" />
                        <circle cx="306" cy="34" r="7" fill="#ff20ee" stroke="#fff" />
                        <circle cx="357" cy="71" r="7" fill="#f0b31f" />
                        <circle cx="433" cy="41" r="10" fill="#1c7d2c" stroke="#5bd06b" strokeWidth="1.500" />
                      </Svg>
                      {PLOT_LABELS.map(([t, x, y, w]) => <PlotLabel key={t} $x={x} $y={y}><V w={w} s={12}>{t}</V></PlotLabel>)}
                      <PlotLabel $x={441} $y={19} $c="#fff"><V w={9} s={13}>0</V></PlotLabel>
                    </PlotArea>
                  </Pane>
                </Stack>
              </CoordColumn>
            </PluginBody>
          </Plugin>
        </FxBottom>
      </Stack>
    </Floating>
  );
}

export default function App() {
  const ref = useRef(null);
  useTracking(ref);
  return (
    <Desktop ref={ref}>
      <Global />
      <Explorer />
      <Reaper />
      <PluginWindow />
      <ParameterDialog />
      <RenderDialog />
      <FinishedDialog />
    </Desktop>
  );
}
